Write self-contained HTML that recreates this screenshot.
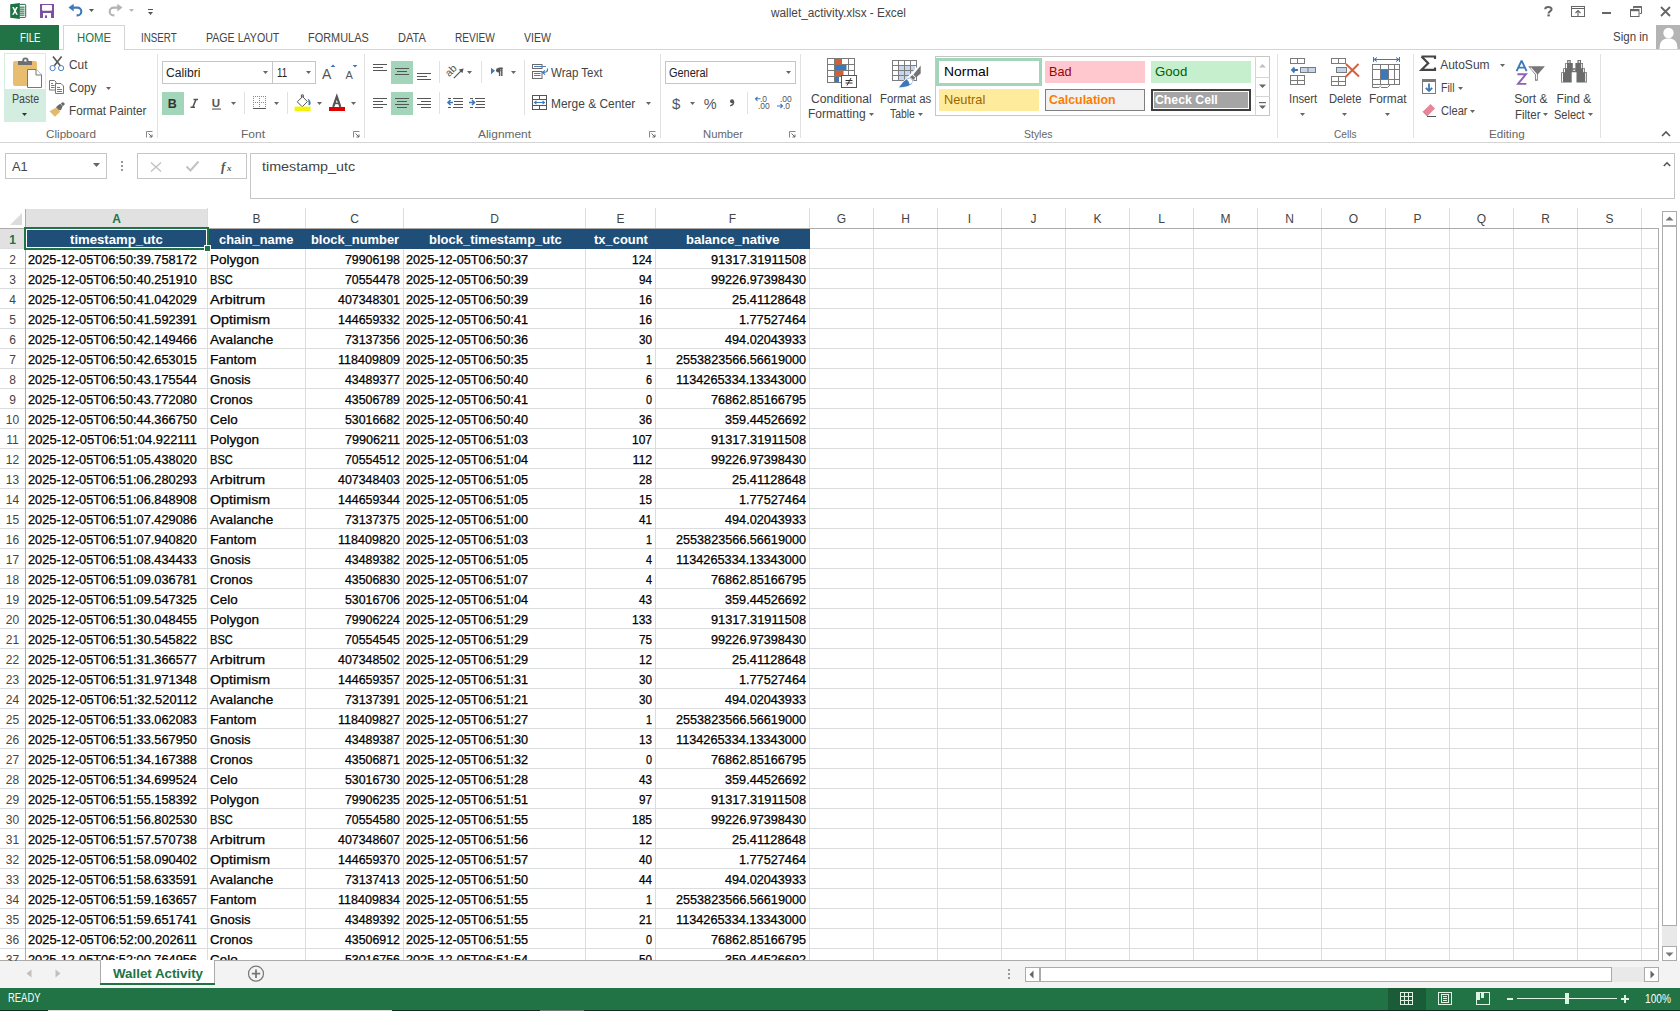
<!DOCTYPE html>
<html><head><meta charset="utf-8"><title>wallet_activity.xlsx - Excel</title>
<style>
html,body{margin:0;padding:0;}
body{width:1680px;height:1011px;overflow:hidden;position:relative;background:#fff;font-family:"Liberation Sans",sans-serif;}
.t{position:absolute;white-space:pre;transform-origin:0 0;}
.g{-webkit-text-stroke:0.25px currentColor;}
.r{position:absolute;box-sizing:border-box;}
svg.r{overflow:visible;}
</style></head><body>
<div class="t" style="left:771.06px;top:7.00px;font-size:12px;line-height:12px;color:#444;font-weight:400;transform:scaleX(0.9838);">wallet_activity.xlsx - Excel</div>
<div class="r" style="left:0px;top:25px;width:59px;height:25px;background:#217346"></div>
<div class="t" style="left:19.50px;top:32.00px;font-size:12px;line-height:12px;color:#fff;font-weight:400;transform:scaleX(0.8096);">FILE</div>
<div class="r" style="left:59px;top:49px;width:1621px;height:1px;background:#d4d4d4"></div>
<div class="r" style="left:63px;top:25px;width:62px;height:25px;border:1px solid #d4d4d4;border-bottom:none;background:#fff"></div>
<div class="t" style="left:76.50px;top:32.00px;font-size:12px;line-height:12px;color:#217346;font-weight:400;transform:scaleX(0.9444);">HOME</div>
<div class="t" style="left:140.50px;top:32.00px;font-size:12px;line-height:12px;color:#444;font-weight:400;transform:scaleX(0.8151);">INSERT</div>
<div class="t" style="left:205.70px;top:32.00px;font-size:12px;line-height:12px;color:#444;font-weight:400;transform:scaleX(0.8840);">PAGE LAYOUT</div>
<div class="t" style="left:308.00px;top:32.00px;font-size:12px;line-height:12px;color:#444;font-weight:400;transform:scaleX(0.9106);">FORMULAS</div>
<div class="t" style="left:398.00px;top:32.00px;font-size:12px;line-height:12px;color:#444;font-weight:400;transform:scaleX(0.9193);">DATA</div>
<div class="t" style="left:455.00px;top:32.00px;font-size:12px;line-height:12px;color:#444;font-weight:400;transform:scaleX(0.8428);">REVIEW</div>
<div class="t" style="left:523.70px;top:32.00px;font-size:12px;line-height:12px;color:#444;font-weight:400;transform:scaleX(0.8774);">VIEW</div>
<div class="t" style="left:1613.00px;top:31.00px;font-size:12px;line-height:12px;color:#444;font-weight:400;transform:scaleX(0.9613);">Sign in</div>
<svg class="r" style="left:9px;top:2px;" width="18" height="18" viewBox="0 0 18 18">
<path d="M1.2 2.2 L10.8 0.9 L10.8 16.9 L1.2 15.8 Z" fill="#1e7145"/>
<rect x="10.3" y="2.4" width="6.4" height="13" rx="0.8" fill="#fff" stroke="#1e7145" stroke-width="1"/>
<g fill="#1e7145"><rect x="10.5" y="4.6" width="5" height="1.1"/><rect x="10.5" y="6.6" width="5" height="1.1"/><rect x="10.5" y="8.6" width="5" height="1.1"/><rect x="10.5" y="10.6" width="5" height="1.1"/><rect x="10.5" y="12.6" width="5" height="1.1"/></g>
<path d="M3.2 5 L4.9 5 L6 7.2 L7.1 5 L8.8 5 L6.9 8.9 L8.9 12.8 L7.2 12.8 L6 10.5 L4.8 12.8 L3.1 12.8 L5.1 8.9 Z" fill="#fff"/>
</svg>
<svg class="r" style="left:40px;top:4px;" width="14" height="14" viewBox="0 0 14 14">
<path d="M0 0H14V14H0Z" fill="#80509f"/>
<rect x="2" y="1" width="10" height="5.8" rx="1" fill="#fff"/>
<rect x="3" y="9" width="8" height="5" fill="#fff"/>
<rect x="5" y="11.4" width="2" height="2.6" fill="#80509f"/>
</svg>
<svg class="r" style="left:67px;top:3px;" width="18" height="15" viewBox="0 0 18 15">
<path d="M5 4.6 H10.4 A3.9 3.9 0 0 1 10.4 12.4 H9.6" fill="none" stroke="#3f79b8" stroke-width="2.1"/>
<path d="M1.5 4.6 L6.7 0.8 L6.7 8.4 Z" fill="#3f79b8"/>
</svg>
<svg class="r" style="left:89px;top:9px;" width="5" height="3" viewBox="0 0 5 3"><path d="M0 0H5L2.5 3Z" fill="#555"/></svg>
<svg class="r" style="left:106px;top:3px;" width="18" height="15" viewBox="0 0 18 15">
<path d="M13 4.6 H7.6 A3.9 3.9 0 0 0 7.6 12.4 H8.4" fill="none" stroke="#b3b3b3" stroke-width="2.1"/>
<path d="M16.5 4.6 L11.3 0.8 L11.3 8.4 Z" fill="#b3b3b3"/>
</svg>
<svg class="r" style="left:129px;top:9px;" width="5" height="3" viewBox="0 0 5 3"><path d="M0 0H5L2.5 3Z" fill="#b8b8b8"/></svg>
<div class="r" style="left:148px;top:9px;width:5px;height:1px;background:#555"></div>
<svg class="r" style="left:148px;top:12px;" width="5" height="3" viewBox="0 0 5 3"><path d="M0 0H5L2.5 3Z" fill="#555"/></svg>
<svg class="r" style="left:1544px;top:6px;" width="9" height="11" viewBox="0 0 9 11"><path d="M1.2 3.2 C1.2 0.4 7.6 0.2 7.6 3.2 C7.6 5.2 4.5 5.5 4.5 7.4" fill="none" stroke="#666" stroke-width="2"/><rect x="3.4" y="8.4" width="2.4" height="2" fill="#666"/></svg>
<svg class="r" style="left:1571px;top:6px;" width="14" height="11" viewBox="0 0 14 11"><rect x="0.5" y="0.5" width="13" height="10" fill="none" stroke="#666"/><path d="M0.5 2.5H13.5" stroke="#666"/><path d="M7 10V4.5 M4.5 7L7 4.5L9.5 7" fill="none" stroke="#666" stroke-width="1.1"/></svg>
<div class="r" style="left:1602px;top:12px;width:9px;height:2px;background:#666"></div>
<svg class="r" style="left:1630px;top:6px;" width="12" height="11" viewBox="0 0 12 11"><path d="M3.5 2.5V0.5H11.5V7.5H9.5" fill="none" stroke="#666" stroke-width="1"/><rect x="0.5" y="3.5" width="8.5" height="7" fill="none" stroke="#666"/><path d="M0.5 4.5H9" stroke="#666" stroke-width="1.4"/><path d="M3.5 1.2H11.5" stroke="#666" stroke-width="1.4"/></svg>
<svg class="r" style="left:1660px;top:6px;" width="11" height="11" viewBox="0 0 11 11"><path d="M1 1L10 10M10 1L1 10" stroke="#666" stroke-width="1.8"/></svg>
<svg class="r" style="left:1656px;top:25px;" width="24" height="24" viewBox="0 0 24 24"><rect width="24" height="24" fill="#b4b4b4"/><circle cx="12.5" cy="8" r="5.2" fill="#fff"/><path d="M3.5 24 C3.5 16 7 13.6 12.5 13.6 C18 13.6 21.5 16 21.5 24Z" fill="#fff"/></svg>
<div class="r" style="left:4px;top:53px;width:42px;height:36px;border:1px solid #d3ede1;border-bottom:none;background:#fff"></div>
<div class="r" style="left:4px;top:89px;width:42px;height:33px;background:#d3ede1"></div>
<svg class="r" style="left:12px;top:57px;" width="31" height="32" viewBox="0 0 31 32">
<rect x="1" y="4" width="24" height="25" rx="2" fill="#e9bd6f"/>
<rect x="6" y="4" width="14" height="4" fill="#6e6e6e"/>
<circle cx="13.4" cy="3.6" r="3.1" fill="#6e6e6e"/><circle cx="13.4" cy="3.4" r="1.2" fill="#fff"/>
<path d="M15.5 12.5 H24 L29.5 18 V30.5 H15.5 Z" fill="#fff" stroke="#777" stroke-width="1"/>
<path d="M24 12.5 V18 H29.5" fill="#fff" stroke="#777" stroke-width="1"/>
</svg>
<div class="t" style="left:11.70px;top:93.00px;font-size:12px;line-height:12px;color:#444;font-weight:400;transform:scaleX(0.8871);">Paste</div>
<svg class="r" style="left:22px;top:113px;" width="5" height="3" viewBox="0 0 5 3"><path d="M0 0H5L2.5 3Z" fill="#333"/></svg>
<svg class="r" style="left:49px;top:55px;" width="17" height="17" viewBox="0 0 17 17">
<path d="M4 1.5 L11.3 10.8 M12.6 1.5 L5.3 10.8" stroke="#555" stroke-width="1.6"/>
<circle cx="3.6" cy="13.1" r="2.6" fill="#fff" stroke="#4a80bd" stroke-width="1"/>
<circle cx="12.1" cy="13.1" r="2.6" fill="#fff" stroke="#4a80bd" stroke-width="1"/>
</svg>
<div class="t" style="left:68.50px;top:59.00px;font-size:12px;line-height:12px;color:#444;font-weight:400;transform:scaleX(0.9861);">Cut</div>
<svg class="r" style="left:48px;top:79px;" width="17" height="16" viewBox="0 0 17 16">
<path d="M1.5 1.5H6.5L8 3V11H1.5Z" fill="#fff" stroke="#777"/>
<g stroke="#4a80bd" stroke-width="1"><path d="M3 4.5H5M3 6.5H6.5M3 8.5H6.5"/></g>
<path d="M7.5 4.5H13L15.5 7V14.5H7.5Z" fill="#fff" stroke="#777"/>
<g stroke="#4a80bd" stroke-width="1"><path d="M9 8.5H12M9 10.5H14M9 12.5H14"/></g>
</svg>
<div class="t" style="left:68.50px;top:82.00px;font-size:12px;line-height:12px;color:#444;font-weight:400;transform:scaleX(0.9779);">Copy</div>
<svg class="r" style="left:106px;top:87px;" width="5" height="3" viewBox="0 0 5 3"><path d="M0 0H5L2.5 3Z" fill="#666"/></svg>
<svg class="r" style="left:49px;top:102px;" width="17" height="15" viewBox="0 0 17 15">
<path d="M0.5 9.2 L7.2 5.5 L11.2 9.8 L5.8 14.8 Z" fill="#e3b96b"/>
<path d="M7.6 4.6 L11.2 1.8 L13.6 4.2 L11.8 8.6 Z" fill="#6a6a6a"/>
<path d="M7 5.2 L10.6 2.4 L13.2 5 L10.2 8.6 Z" fill="#6a6a6a"/>
<path d="M11.8 1.6 L14 0 L16 2 L13.8 4.2 Z" fill="#6a6a6a"/>
</svg>
<div class="t" style="left:68.50px;top:105.00px;font-size:12px;line-height:12px;color:#444;font-weight:400;transform:scaleX(0.9763);">Format Painter</div>
<svg class="r" style="left:146px;top:131px;" width="7" height="7" viewBox="0 0 7 7"><path d="M0.5 6.5V0.5H6.5" fill="none" stroke="#888"/><path d="M2.5 2.5L6 6M6 3.5V6H3.5" fill="none" stroke="#666" stroke-width="1"/></svg>
<div class="r" style="left:162px;top:61px;width:111px;height:23px;border:1px solid #c6c6c6;background:#fff"></div>
<div class="r" style="left:272px;top:61px;width:44px;height:23px;border:1px solid #c6c6c6;background:#fff"></div>
<div class="t" style="left:165.60px;top:67.00px;font-size:12px;line-height:12px;color:#222;font-weight:400;transform:scaleX(1.0112);">Calibri</div>
<svg class="r" style="left:263px;top:71px;" width="5" height="3" viewBox="0 0 5 3"><path d="M0 0H5L2.5 3Z" fill="#666"/></svg>
<div class="t" style="left:277.00px;top:67.00px;font-size:12px;line-height:12px;color:#222;font-weight:400;transform:scaleX(0.8013);">11</div>
<svg class="r" style="left:306px;top:71px;" width="5" height="3" viewBox="0 0 5 3"><path d="M0 0H5L2.5 3Z" fill="#666"/></svg>
<svg class="r" style="left:321px;top:64px;" width="16" height="16" viewBox="0 0 16 16"><text x="1" y="14.5" font-family="Liberation Sans" font-size="14" fill="#555">A</text><path d="M9.5 3H14.5L12 0.5Z" fill="#3d78b8"/></svg>
<svg class="r" style="left:344px;top:64px;" width="16" height="16" viewBox="0 0 16 16"><text x="1.5" y="14.5" font-family="Liberation Sans" font-size="11" fill="#555">A</text><path d="M8.5 1H13.5L11 3.5Z" fill="#3d78b8"/></svg>
<div class="r" style="left:162px;top:92px;width:22px;height:23px;background:#a2d5b9"></div>
<svg class="r" style="left:162px;top:92px;" width="22" height="23" viewBox="0 0 22 23"><text x="5.8" y="15.6" font-family="Liberation Sans" font-weight="700" font-size="12.5" fill="#333">B</text></svg>
<svg class="r" style="left:186px;top:92px;" width="18" height="23" viewBox="0 0 18 23"><path d="M7.5 7.4H12 M4.5 15.3H9 M10 7.4 L6.8 15.3" fill="none" stroke="#555" stroke-width="1.5"/></svg>
<svg class="r" style="left:206px;top:92px;" width="20" height="23" viewBox="0 0 20 23"><text x="5.8" y="15.2" font-family="Liberation Sans" font-weight="700" font-size="11.5" fill="#555">U</text><rect x="6" y="16.5" width="9" height="1.1" fill="#555"/></svg>
<svg class="r" style="left:231px;top:102px;" width="5" height="3" viewBox="0 0 5 3"><path d="M0 0H5L2.5 3Z" fill="#666"/></svg>
<div class="r" style="left:244px;top:92px;width:1px;height:22px;background:#e1e1e1"></div>
<svg class="r" style="left:252px;top:95px;" width="15" height="15" viewBox="0 0 15 15"><g fill="#888"><path d="M1 1h1v1H1zM3 1h1v1H3zM5 1h1v1H5zM7 1h1v1H7zM9 1h1v1H9zM11 1h1v1h-1zM13 1h1v1h-1zM1 3h1v1H1zM7 3h1v1H7zM13 3h1v1h-1zM1 5h1v1H1zM7 5h1v1H7zM13 5h1v1h-1zM1 7h1v1H1zM3 7h1v1H3zM5 7h1v1H5zM7 7h1v1H7zM9 7h1v1H9zM11 7h1v1h-1zM13 7h1v1h-1zM1 9h1v1H1zM7 9h1v1H7zM13 9h1v1h-1zM1 11h1v1H1zM7 11h1v1H7zM13 11h1v1h-1z"/></g><rect x="1" y="13" width="13" height="1" fill="#555"/></svg>
<svg class="r" style="left:274px;top:102px;" width="5" height="3" viewBox="0 0 5 3"><path d="M0 0H5L2.5 3Z" fill="#666"/></svg>
<div class="r" style="left:287px;top:92px;width:1px;height:22px;background:#e1e1e1"></div>
<svg class="r" style="left:293px;top:94px;" width="19" height="18" viewBox="0 0 19 18">
<path d="M4.3 7.8 L9.6 2.6 L14.4 7.6 L9.2 12.8 Z" fill="#fff" stroke="#555" stroke-width="1" stroke-linejoin="round"/>
<path d="M8.4 4 V0.9 H10.3 V3.6" fill="none" stroke="#555" stroke-width="1"/>
<path d="M14.6 4.8 C16.8 5.6 18 7.6 17.6 9.8 C17.2 11.2 16 11.6 15.4 11 C15.8 9 15.6 7 14.6 4.8Z" fill="#3d78b8"/>
<rect x="1.6" y="12.6" width="16" height="4.6" fill="#f2f20a"/>
</svg>
<svg class="r" style="left:317px;top:102px;" width="5" height="3" viewBox="0 0 5 3"><path d="M0 0H5L2.5 3Z" fill="#666"/></svg>
<svg class="r" style="left:328px;top:95px;" width="18" height="17" viewBox="0 0 18 17">
<path d="M5.2 11.8 L8.8 1.6 L12.4 11.8" fill="none" stroke="#555" stroke-width="2.2" stroke-linejoin="miter"/>
<path d="M6.6 8.4H11" stroke="#555" stroke-width="1.5"/>
<rect x="1" y="12" width="16" height="4" fill="#e00000"/>
</svg>
<svg class="r" style="left:351px;top:102px;" width="5" height="3" viewBox="0 0 5 3"><path d="M0 0H5L2.5 3Z" fill="#666"/></svg>
<svg class="r" style="left:353px;top:131px;" width="7" height="7" viewBox="0 0 7 7"><path d="M0.5 6.5V0.5H6.5" fill="none" stroke="#888"/><path d="M2.5 2.5L6 6M6 3.5V6H3.5" fill="none" stroke="#666" stroke-width="1"/></svg>
<div class="r" style="left:391px;top:61px;width:22px;height:23px;background:#a2d5b9"></div>
<div class="r" style="left:391px;top:92px;width:22px;height:23px;background:#a2d5b9"></div>
<svg class="r" style="left:373px;top:0px;" width="14" height="1" viewBox="0 0 14 1"><rect x="0" y="64" width="14" height="1" fill="#555"/><rect x="0" y="67" width="10" height="1" fill="#555"/><rect x="0" y="70" width="14" height="1" fill="#555"/></svg>
<svg class="r" style="left:395px;top:0px;" width="14" height="1" viewBox="0 0 14 1"><rect x="0.0" y="68" width="14" height="1" fill="#555"/><rect x="2.0" y="71" width="10" height="1" fill="#555"/><rect x="0.0" y="74" width="14" height="1" fill="#555"/></svg>
<svg class="r" style="left:417px;top:0px;" width="14" height="1" viewBox="0 0 14 1"><rect x="0" y="73" width="14" height="1" fill="#555"/><rect x="0" y="76" width="10" height="1" fill="#555"/><rect x="0" y="79" width="14" height="1" fill="#555"/></svg>
<svg class="r" style="left:373px;top:0px;" width="14" height="1" viewBox="0 0 14 1"><rect x="0" y="98" width="14" height="1" fill="#555"/><rect x="0" y="101" width="10" height="1" fill="#555"/><rect x="0" y="104" width="14" height="1" fill="#555"/><rect x="0" y="107" width="10" height="1" fill="#555"/></svg>
<svg class="r" style="left:395px;top:0px;" width="14" height="1" viewBox="0 0 14 1"><rect x="0.0" y="98" width="14" height="1" fill="#555"/><rect x="2.0" y="101" width="10" height="1" fill="#555"/><rect x="0.0" y="104" width="14" height="1" fill="#555"/><rect x="2.0" y="107" width="10" height="1" fill="#555"/></svg>
<svg class="r" style="left:417px;top:0px;" width="14" height="1" viewBox="0 0 14 1"><rect x="0" y="98" width="14" height="1" fill="#555"/><rect x="4" y="101" width="10" height="1" fill="#555"/><rect x="0" y="104" width="14" height="1" fill="#555"/><rect x="4" y="107" width="10" height="1" fill="#555"/></svg>
<div class="r" style="left:439px;top:61px;width:1px;height:22px;background:#e1e1e1"></div>
<div class="r" style="left:439px;top:92px;width:1px;height:22px;background:#e1e1e1"></div>
<div class="r" style="left:481px;top:61px;width:1px;height:22px;background:#e1e1e1"></div>
<div class="r" style="left:524px;top:60px;width:1px;height:55px;background:#e1e1e1"></div>
<svg class="r" style="left:444px;top:62px;" width="22" height="20" viewBox="0 0 22 20">
<text x="0" y="0" transform="translate(5.2 15.2) rotate(-45)" font-family="Liberation Sans" font-size="10.5" fill="#555">ab</text>
<path d="M9.8 16.2 L18.6 7.4" stroke="#555" stroke-width="1.2"/>
<path d="M19.6 6.4 L14.8 7.6 L18.4 11.2 Z" fill="#555"/>
</svg>
<svg class="r" style="left:467px;top:71px;" width="5" height="3" viewBox="0 0 5 3"><path d="M0 0H5L2.5 3Z" fill="#666"/></svg>
<svg class="r" style="left:490px;top:67px;" width="14" height="10" viewBox="0 0 14 10"><path d="M1 0.8 L5 3.8 L1 7.2Z" fill="#3d78b8"/><path d="M8.6 1.2H12.8 M9.6 1.2V9 M11.8 1.2V9" stroke="#555" stroke-width="1.4"/><circle cx="8.3" cy="3.3" r="2.3" fill="#555"/></svg>
<svg class="r" style="left:511px;top:71px;" width="5" height="3" viewBox="0 0 5 3"><path d="M0 0H5L2.5 3Z" fill="#666"/></svg>
<svg class="r" style="left:446px;top:97px;" width="18" height="12" viewBox="0 0 18 12">
<g fill="#555"><rect x="7" y="1" width="10" height="1"/><rect x="8" y="4" width="9" height="1"/><rect x="8" y="7" width="9" height="1"/><rect x="7" y="10" width="10" height="1"/><rect x="2" y="1" width="3" height="1"/><rect x="2" y="10" width="3" height="1"/></g>
<path d="M7 5.5 H2 M4.5 3 L2 5.5 L4.5 8" fill="none" stroke="#3d78b8" stroke-width="1.6"/>
</svg>
<svg class="r" style="left:468px;top:97px;" width="18" height="12" viewBox="0 0 18 12">
<g fill="#555"><rect x="7" y="1" width="10" height="1"/><rect x="8" y="4" width="9" height="1"/><rect x="8" y="7" width="9" height="1"/><rect x="7" y="10" width="10" height="1"/><rect x="2" y="1" width="3" height="1"/><rect x="2" y="10" width="3" height="1"/></g>
<path d="M1 5.5 H6.5 M4 3 L6.5 5.5 L4 8" fill="none" stroke="#3d78b8" stroke-width="1.6"/>
</svg>
<svg class="r" style="left:531px;top:63px;" width="18" height="17" viewBox="0 0 18 17">
<rect x="1.5" y="1.5" width="9.5" height="4" fill="#fff" stroke="#6a6a6a"/>
<path d="M3 3.5 H15" stroke="#4d7fb5" stroke-width="1"/>
<rect x="1.5" y="8.5" width="9.5" height="7" fill="#fff" stroke="#6a6a6a"/>
<path d="M3 10.5H9.5 M3 12.5H9.5" stroke="#4d7fb5" stroke-width="1"/>
<path d="M16.5 5.5 C17 8.5 15.5 9.5 11.8 9.5" fill="none" stroke="#3d78b8" stroke-width="1.2"/>
<path d="M14 7.4 L11.6 9.5 L14 11.6" fill="none" stroke="#3d78b8" stroke-width="1.2"/>
</svg>
<div class="t" style="left:551.40px;top:67.00px;font-size:12px;line-height:12px;color:#444;font-weight:400;transform:scaleX(0.9612);">Wrap Text</div>
<svg class="r" style="left:531px;top:94px;" width="17" height="17" viewBox="0 0 17 17">
<rect x="1.5" y="1.5" width="14" height="14" fill="none" stroke="#555"/>
<path d="M1.5 5.5H15.5 M1.5 11.5H15.5 M8.5 1.5V5.5 M8.5 11.5V15.5" stroke="#555"/>
<path d="M3.5 8.5H13.5 M5.5 6.8 L3.5 8.5 L5.5 10.2 M11.5 6.8 L13.5 8.5 L11.5 10.2" fill="none" stroke="#3d78b8" stroke-width="1.1"/>
</svg>
<div class="t" style="left:551.40px;top:98.00px;font-size:12px;line-height:12px;color:#444;font-weight:400;transform:scaleX(0.9950);">Merge &amp; Center</div>
<svg class="r" style="left:646px;top:102px;" width="5" height="3" viewBox="0 0 5 3"><path d="M0 0H5L2.5 3Z" fill="#666"/></svg>
<svg class="r" style="left:649px;top:131px;" width="7" height="7" viewBox="0 0 7 7"><path d="M0.5 6.5V0.5H6.5" fill="none" stroke="#888"/><path d="M2.5 2.5L6 6M6 3.5V6H3.5" fill="none" stroke="#666" stroke-width="1"/></svg>
<div class="r" style="left:665px;top:61px;width:131px;height:23px;border:1px solid #c6c6c6;background:#fff"></div>
<div class="t" style="left:668.60px;top:67.00px;font-size:12px;line-height:12px;color:#222;font-weight:400;transform:scaleX(0.9129);">General</div>
<svg class="r" style="left:786px;top:71px;" width="5" height="3" viewBox="0 0 5 3"><path d="M0 0H5L2.5 3Z" fill="#666"/></svg>
<svg class="r" style="left:670px;top:94px;" width="14" height="18" viewBox="0 0 14 18"><text x="2" y="14.5" font-family="Liberation Sans" font-size="15" fill="#555">$</text></svg>
<svg class="r" style="left:690px;top:102px;" width="5" height="3" viewBox="0 0 5 3"><path d="M0 0H5L2.5 3Z" fill="#666"/></svg>
<svg class="r" style="left:702px;top:94px;" width="16" height="17" viewBox="0 0 16 17"><text x="1.8" y="14.8" font-family="Liberation Sans" font-size="14.5" fill="#555">%</text></svg>
<svg class="r" style="left:727px;top:98px;" width="8" height="9" viewBox="0 0 8 9"><circle cx="5" cy="3.2" r="2" fill="#555"/><path d="M6.6 3.5 C6.8 5.8 5.2 7.2 3.2 7.8" fill="none" stroke="#555" stroke-width="1.4"/></svg>
<div class="r" style="left:747px;top:92px;width:1px;height:22px;background:#e1e1e1"></div>
<svg class="r" style="left:754px;top:95px;" width="17" height="15" viewBox="0 0 17 15">
<text x="6" y="7" font-family="Liberation Sans" font-size="8.5" fill="#555">.0</text>
<text x="4" y="14" font-family="Liberation Sans" font-size="8.5" fill="#555">.00</text>
<path d="M6.5 3.8H1.5 M3.5 1.8 L1.5 3.8 L3.5 5.8" fill="none" stroke="#3d78b8" stroke-width="1.1"/>
</svg>
<svg class="r" style="left:776px;top:95px;" width="17" height="15" viewBox="0 0 17 15">
<text x="4" y="7" font-family="Liberation Sans" font-size="8.5" fill="#555">.00</text>
<text x="7" y="14" font-family="Liberation Sans" font-size="8.5" fill="#555">.0</text>
<path d="M1 11H6.5 M4.5 9 L6.5 11 L4.5 13" fill="none" stroke="#3d78b8" stroke-width="1.1"/>
</svg>
<svg class="r" style="left:789px;top:131px;" width="7" height="7" viewBox="0 0 7 7"><path d="M0.5 6.5V0.5H6.5" fill="none" stroke="#888"/><path d="M2.5 2.5L6 6M6 3.5V6H3.5" fill="none" stroke="#666" stroke-width="1"/></svg>
<svg class="r" style="left:826px;top:57px;" width="32" height="32" viewBox="0 0 32 32">
<g fill="none" stroke="#7a7a7a" stroke-width="1"><rect x="1.5" y="1.5" width="27" height="24"/>
<path d="M8.5 1.5V25.5 M15.5 1.5V25.5 M22.5 1.5V25.5 M1.5 7.5H28.5 M1.5 13.5H28.5 M1.5 19.5H28.5"/></g>
<rect x="9" y="2" width="6" height="5.5" fill="#d85c34"/>
<rect x="9" y="8" width="11.5" height="5" fill="#3d78b8"/>
<rect x="9" y="14" width="8.5" height="5" fill="#d85c34"/>
<rect x="9" y="20" width="4" height="5" fill="#3d78b8"/>
<rect x="15.5" y="18.5" width="15" height="12" fill="#fff" stroke="#555" stroke-width="1"/>
<path d="M19.5 23.5H26.5 M19.5 26H26.5 M25 21 L21 28.5" stroke="#333" stroke-width="1"/>
</svg>
<div class="t" style="left:810.80px;top:93.00px;font-size:12px;line-height:12px;color:#444;font-weight:400;transform:scaleX(1.0090);">Conditional</div>
<div class="t" style="left:807.70px;top:108.00px;font-size:12px;line-height:12px;color:#444;font-weight:400;transform:scaleX(1.0042);">Formatting</div>
<svg class="r" style="left:869px;top:113px;" width="5" height="3" viewBox="0 0 5 3"><path d="M0 0H5L2.5 3Z" fill="#666"/></svg>
<svg class="r" style="left:891px;top:59px;" width="32" height="30" viewBox="0 0 32 30">
<rect x="7" y="6" width="17" height="16" fill="#c6d6ee"/>
<g fill="none" stroke="#7d7d7d" stroke-width="1"><rect x="1.5" y="1.5" width="24" height="20"/>
<path d="M7.5 1.5V21.5 M13.5 1.5V21.5 M19.5 1.5V21.5 M1.5 6.5H25.5 M1.5 11.5H25.5 M1.5 16.5H25.5"/></g>
<path d="M13 25 L30.5 7" stroke="#fff" stroke-width="5"/>
<path d="M29.7 6.6 L29.7 14.4 L25 18.4 L22.4 15.6 Z" fill="#747474"/>
<path d="M18.6 18.6 L21.4 16 L24.2 18.8 L21.4 21.4 Z" fill="#747474"/>
<path d="M7.2 28.8 C10 25.4 12.5 21.6 15 20.3 A3.7 3.7 0 0 1 21.2 24.6 C19 27.4 14 28.8 7.2 28.8 Z" fill="#3d78b8" stroke="#fff" stroke-width="0.8"/>
<path d="M15.8 20.6 A3 3 0 0 1 20.7 24.2 L18.6 25.4 C18.2 23.4 17.2 21.8 15.8 20.6Z" fill="#fff"/>
</svg>
<div class="t" style="left:879.90px;top:93.00px;font-size:12px;line-height:12px;color:#444;font-weight:400;transform:scaleX(0.9481);">Format as</div>
<div class="t" style="left:890.20px;top:108.00px;font-size:12px;line-height:12px;color:#444;font-weight:400;transform:scaleX(0.8682);">Table</div>
<svg class="r" style="left:918px;top:113px;" width="5" height="3" viewBox="0 0 5 3"><path d="M0 0H5L2.5 3Z" fill="#666"/></svg>
<div class="r" style="left:935px;top:56px;width:335px;height:60px;border:1px solid #c6c6c6;background:#fff"></div>
<div class="r" style="left:1255px;top:56px;width:15px;height:60px;border-left:1px solid #d4d4d4"></div>
<div class="r" style="left:1255px;top:77px;width:15px;height:1px;background:#d4d4d4"></div>
<div class="r" style="left:1255px;top:96px;width:15px;height:1px;background:#d4d4d4"></div>
<svg class="r" style="left:1258px;top:63px;" width="9" height="5" viewBox="0 0 9 5"><path d="M1 4.5H8L4.5 1Z" fill="#c0c0c0"/></svg>
<svg class="r" style="left:1258px;top:84px;" width="9" height="5" viewBox="0 0 9 5"><path d="M1 0.5H8L4.5 4Z" fill="#666"/></svg>
<svg class="r" style="left:1258px;top:101px;" width="9" height="9" viewBox="0 0 9 9"><rect x="1" y="1" width="7" height="1.2" fill="#666"/><path d="M1 4.5H8L4.5 8Z" fill="#666"/></svg>
<div class="r" style="left:936px;top:58px;width:106px;height:28px;border:3px solid #a2d5b9;background:#fff"></div>
<div class="t" style="left:943.70px;top:65.00px;font-size:13px;line-height:13px;color:#000;font-weight:400;transform:scaleX(1.0686);">Normal</div>
<div class="r" style="left:1045px;top:61px;width:100px;height:22px;background:#ffc7ce"></div>
<div class="t" style="left:1049.40px;top:65.00px;font-size:13px;line-height:13px;color:#9c0006;font-weight:400;transform:scaleX(0.9767);">Bad</div>
<div class="r" style="left:1151px;top:61px;width:100px;height:22px;background:#c6efce"></div>
<div class="t" style="left:1155.20px;top:65.00px;font-size:13px;line-height:13px;color:#006100;font-weight:400;transform:scaleX(1.0162);">Good</div>
<div class="r" style="left:939px;top:89px;width:100px;height:22px;background:#ffeb9c"></div>
<div class="t" style="left:943.70px;top:93.00px;font-size:13px;line-height:13px;color:#9c6500;font-weight:400;transform:scaleX(0.9851);">Neutral</div>
<div class="r" style="left:1045px;top:89px;width:100px;height:22px;background:#f2f2f2;border:1px solid #7f7f7f"></div>
<div class="t" style="left:1049.40px;top:93.00px;font-size:13px;line-height:13px;color:#fa7d00;font-weight:700;transform:scaleX(0.9505);">Calculation</div>
<div class="r" style="left:1151px;top:89px;width:100px;height:22px;background:#a5a5a5;border:2px solid #3f3f3f;box-shadow:inset 0 0 0 1px #fff"></div>
<div class="t" style="left:1155.20px;top:93.00px;font-size:13px;line-height:13px;color:#fff;font-weight:700;transform:scaleX(0.9444);">Check Cell</div>
<svg class="r" style="left:1289px;top:57px;" width="29" height="30" viewBox="0 0 29 30">
<g fill="none" stroke="#7a7a7a" stroke-width="1"><rect x="1.5" y="1.5" width="14" height="5"/><path d="M8.5 1.5V6.5"/>
<rect x="1.5" y="18.5" width="14" height="9"/><path d="M8.5 18.5V27.5 M1.5 23.5H15.5"/></g>
<rect x="11.5" y="10.5" width="15" height="5" fill="#c3d6ec" stroke="#7a7a7a"/><path d="M19 10.5V15.5" stroke="#7a7a7a"/>
<path d="M9 13H3 M5.5 10.5 L3 13 L5.5 15.5" fill="none" stroke="#3d78b8" stroke-width="1.8"/>
</svg>
<div class="t" style="left:1288.60px;top:93.00px;font-size:12px;line-height:12px;color:#444;font-weight:400;transform:scaleX(0.9400);">Insert</div>
<svg class="r" style="left:1300px;top:113px;" width="5" height="3" viewBox="0 0 5 3"><path d="M0 0H5L2.5 3Z" fill="#666"/></svg>
<svg class="r" style="left:1330px;top:57px;" width="31" height="31" viewBox="0 0 31 31">
<g fill="none" stroke="#7a7a7a" stroke-width="1"><rect x="1.5" y="1.5" width="14" height="5"/><path d="M8.5 1.5V6.5"/>
<rect x="1.5" y="19.5" width="14" height="9"/><path d="M8.5 19.5V28.5 M1.5 24.5H15.5"/></g>
<rect x="6.5" y="10.5" width="10" height="5" fill="#c3d6ec" stroke="#7a7a7a"/>
<path d="M16 7 L29 19.5 M28.5 7 L15.5 20" stroke="#d9603b" stroke-width="2"/>
</svg>
<div class="t" style="left:1328.60px;top:93.00px;font-size:12px;line-height:12px;color:#444;font-weight:400;transform:scaleX(0.9343);">Delete</div>
<svg class="r" style="left:1342px;top:113px;" width="5" height="3" viewBox="0 0 5 3"><path d="M0 0H5L2.5 3Z" fill="#666"/></svg>
<svg class="r" style="left:1371px;top:56px;" width="32" height="33" viewBox="0 0 32 33">
<path d="M2.5 1V6 M28.5 1V6 M3 3.5H28 M6 1.5 L3 3.5 L6 5.5 M25 1.5 L28 3.5 L25 5.5" fill="none" stroke="#3d78b8" stroke-width="1"/>
<g fill="none" stroke="#7a7a7a" stroke-width="1"><rect x="1.5" y="8.5" width="27" height="20"/>
<path d="M9.5 8.5V28.5 M17.5 8.5V28.5 M23.5 8.5V28.5 M1.5 13.5H28.5 M1.5 23.5H28.5"/>
<path d="M1.5 28.5 V31.5 H8 L10 29.5 M10 31.5 H16.5 L19.5 28.5"/></g>
<rect x="10" y="14" width="7" height="9" fill="#3d78b8"/>
</svg>
<div class="t" style="left:1368.50px;top:93.00px;font-size:12px;line-height:12px;color:#444;font-weight:400;transform:scaleX(0.9874);">Format</div>
<svg class="r" style="left:1385px;top:113px;" width="5" height="3" viewBox="0 0 5 3"><path d="M0 0H5L2.5 3Z" fill="#666"/></svg>
<svg class="r" style="left:1420px;top:55px;" width="17" height="17" viewBox="0 0 17 17"><path d="M1.5 1.5H15 V4 M1.5 1.5 L8.2 8.2 L1.5 14.8 H15 V12.5" fill="none" stroke="#444" stroke-width="2.2" stroke-linejoin="miter"/></svg>
<div class="t" style="left:1440.20px;top:59.00px;font-size:12px;line-height:12px;color:#444;font-weight:400;">AutoSum</div>
<svg class="r" style="left:1500px;top:64px;" width="5" height="3" viewBox="0 0 5 3"><path d="M0 0H5L2.5 3Z" fill="#666"/></svg>
<svg class="r" style="left:1421px;top:78px;" width="16" height="17" viewBox="0 0 16 17"><rect x="1.5" y="1.5" width="13" height="14" fill="#fff" stroke="#7a7a7a"/><rect x="1" y="1" width="14" height="3" fill="#7a7a7a"/><path d="M8 5.5V13 M4.8 9.8 L8 13 L11.2 9.8" fill="none" stroke="#3d78b8" stroke-width="1.8"/></svg>
<div class="t" style="left:1440.50px;top:82.00px;font-size:12px;line-height:12px;color:#444;font-weight:400;transform:scaleX(0.8824);">Fill</div>
<svg class="r" style="left:1458px;top:87px;" width="5" height="3" viewBox="0 0 5 3"><path d="M0 0H5L2.5 3Z" fill="#666"/></svg>
<svg class="r" style="left:1421px;top:102px;" width="16" height="15" viewBox="0 0 16 15"><path d="M2 9.5 L9.5 2 L14 6.5 L6.5 14 Z" fill="#e8849b"/><path d="M2 9.5 L6.5 14" stroke="#c85e77" stroke-width="1"/><path d="M6 14.5H15" stroke="#555" stroke-width="1"/></svg>
<div class="t" style="left:1440.50px;top:105.00px;font-size:12px;line-height:12px;color:#444;font-weight:400;transform:scaleX(0.9240);">Clear</div>
<svg class="r" style="left:1470px;top:110px;" width="5" height="3" viewBox="0 0 5 3"><path d="M0 0H5L2.5 3Z" fill="#666"/></svg>
<svg class="r" style="left:1510px;top:52px;" width="40" height="36" viewBox="0 0 40 36">
<path d="M6.6 19.2 L11.6 8.6 L16.6 19.2 M8.5 15.6 H14.7" fill="none" stroke="#3d78b8" stroke-width="1.9" stroke-linejoin="bevel"/>
<path d="M7.4 22.2 H16 L8 31.9 H16.4" fill="none" stroke="#8e62b6" stroke-width="1.9"/>
<path d="M18.2 14.2 H34.9 L27.8 22.5 V28.8 H25 V22.5 Z" fill="#777"/>
<path d="M20.6 15.6 L26.4 22.2 V27.6" fill="none" stroke="#fff" stroke-width="1.1"/>
</svg>
<div class="t" style="left:1514.20px;top:93.00px;font-size:12px;line-height:12px;color:#444;font-weight:400;">Sort &amp;</div>
<div class="t" style="left:1514.50px;top:109.00px;font-size:12px;line-height:12px;color:#444;font-weight:400;transform:scaleX(0.9572);">Filter</div>
<svg class="r" style="left:1543px;top:113px;" width="5" height="3" viewBox="0 0 5 3"><path d="M0 0H5L2.5 3Z" fill="#666"/></svg>
<svg class="r" style="left:1560px;top:59px;" width="29" height="25" viewBox="0 0 29 25">
<g fill="#6b6b6b">
<path d="M7.2 1.1 H10.7 V3.9 H12.8 V13.2 H11.7 V23.6 H1.2 V13.2 H3.2 V9.2 H5.2 V3.9 H7.2 Z"/>
<path d="M21 1.1 H17.5 V3.9 H15.4 V13.2 H16.5 V23.6 H27 V13.2 H25 V9.2 H23 V3.9 H21 Z"/>
<rect x="12.5" y="9.2" width="3.2" height="4"/>
</g>
<g fill="#fff"><rect x="8.4" y="1.8" width="1.1" height="2.1"/><rect x="18.7" y="1.8" width="1.1" height="2.1"/>
<rect x="13.2" y="10.7" width="1.8" height="1.1"/>
<rect x="2" y="14" width="1" height="8.8"/><rect x="4" y="10" width="1" height="3.2"/><rect x="6" y="4.7" width="1" height="4.5"/>
<rect x="25.2" y="14" width="1" height="8.8"/><rect x="23.2" y="10" width="1" height="3.2"/><rect x="21.2" y="4.7" width="1" height="4.5"/></g>
</svg>
<div class="t" style="left:1556.60px;top:93.00px;font-size:12px;line-height:12px;color:#444;font-weight:400;">Find &amp;</div>
<div class="t" style="left:1554.40px;top:109.00px;font-size:12px;line-height:12px;color:#444;font-weight:400;transform:scaleX(0.9173);">Select</div>
<svg class="r" style="left:1588px;top:113px;" width="5" height="3" viewBox="0 0 5 3"><path d="M0 0H5L2.5 3Z" fill="#666"/></svg>
<svg class="r" style="left:1661px;top:130px;" width="10" height="7" viewBox="0 0 10 7"><path d="M1 6 L5 2 L9 6" fill="none" stroke="#555" stroke-width="1.6"/></svg>
<div class="r" style="left:0px;top:142px;width:1680px;height:1px;background:#d4d4d4"></div>
<div class="r" style="left:157px;top:54px;width:1px;height:84px;background:#e1e1e1"></div>
<div class="r" style="left:364px;top:54px;width:1px;height:84px;background:#e1e1e1"></div>
<div class="r" style="left:660px;top:54px;width:1px;height:84px;background:#e1e1e1"></div>
<div class="r" style="left:800px;top:54px;width:1px;height:84px;background:#e1e1e1"></div>
<div class="r" style="left:1277px;top:54px;width:1px;height:84px;background:#e1e1e1"></div>
<div class="r" style="left:1413px;top:54px;width:1px;height:84px;background:#e1e1e1"></div>
<div class="r" style="left:1600px;top:54px;width:1px;height:84px;background:#e1e1e1"></div>
<div class="t" style="left:45.50px;top:129.00px;font-size:11.5px;line-height:11.5px;color:#666;font-weight:400;transform:scaleX(1.0158);">Clipboard</div>
<div class="t" style="left:241.00px;top:129.00px;font-size:11.5px;line-height:11.5px;color:#666;font-weight:400;transform:scaleX(1.0435);">Font</div>
<div class="t" style="left:478.00px;top:129.00px;font-size:11.5px;line-height:11.5px;color:#666;font-weight:400;transform:scaleX(1.0368);">Alignment</div>
<div class="t" style="left:702.90px;top:129.00px;font-size:11.5px;line-height:11.5px;color:#666;font-weight:400;transform:scaleX(0.9784);">Number</div>
<div class="t" style="left:1024.00px;top:129.00px;font-size:11.5px;line-height:11.5px;color:#666;font-weight:400;transform:scaleX(0.9095);">Styles</div>
<div class="t" style="left:1333.70px;top:129.00px;font-size:11.5px;line-height:11.5px;color:#666;font-weight:400;transform:scaleX(0.8832);">Cells</div>
<div class="t" style="left:1488.80px;top:129.00px;font-size:11.5px;line-height:11.5px;color:#666;font-weight:400;transform:scaleX(1.0145);">Editing</div>
<div class="r" style="left:5px;top:153px;width:102px;height:26px;border:1px solid #c6c6c6;background:#fff"></div>
<div class="t" style="left:12.00px;top:161.00px;font-size:12px;line-height:12px;color:#444;font-weight:400;transform:scaleX(1.0680);">A1</div>
<div class="r" style="left:137px;top:153px;width:110px;height:26px;border:1px solid #c6c6c6;background:#fff"></div>
<div class="r" style="left:250px;top:153px;width:425px;height:46px;border:1px solid #c6c6c6;border-right:none;background:#fff"></div>
<div class="r" style="left:250px;top:153px;width:1425px;height:46px;border:1px solid #c6c6c6;background:#fff"></div>
<div class="t" style="left:262.00px;top:161.00px;font-size:12px;line-height:12px;color:#444;font-weight:400;transform:scaleX(1.1940);">timestamp_utc</div>
<div class="r" style="left:25px;top:209px;width:182px;height:19px;background:#e1e1e1"></div>
<div class="r" style="left:0px;top:229px;width:25px;height:19px;background:#e1e1e1"></div>
<div class="r" style="left:26px;top:248px;width:1632px;height:1px;background:#dadcdd"></div>
<div class="r" style="left:26px;top:268px;width:1632px;height:1px;background:#dadcdd"></div>
<div class="r" style="left:26px;top:288px;width:1632px;height:1px;background:#dadcdd"></div>
<div class="r" style="left:26px;top:308px;width:1632px;height:1px;background:#dadcdd"></div>
<div class="r" style="left:26px;top:328px;width:1632px;height:1px;background:#dadcdd"></div>
<div class="r" style="left:26px;top:348px;width:1632px;height:1px;background:#dadcdd"></div>
<div class="r" style="left:26px;top:368px;width:1632px;height:1px;background:#dadcdd"></div>
<div class="r" style="left:26px;top:388px;width:1632px;height:1px;background:#dadcdd"></div>
<div class="r" style="left:26px;top:408px;width:1632px;height:1px;background:#dadcdd"></div>
<div class="r" style="left:26px;top:428px;width:1632px;height:1px;background:#dadcdd"></div>
<div class="r" style="left:26px;top:448px;width:1632px;height:1px;background:#dadcdd"></div>
<div class="r" style="left:26px;top:468px;width:1632px;height:1px;background:#dadcdd"></div>
<div class="r" style="left:26px;top:488px;width:1632px;height:1px;background:#dadcdd"></div>
<div class="r" style="left:26px;top:508px;width:1632px;height:1px;background:#dadcdd"></div>
<div class="r" style="left:26px;top:528px;width:1632px;height:1px;background:#dadcdd"></div>
<div class="r" style="left:26px;top:548px;width:1632px;height:1px;background:#dadcdd"></div>
<div class="r" style="left:26px;top:568px;width:1632px;height:1px;background:#dadcdd"></div>
<div class="r" style="left:26px;top:588px;width:1632px;height:1px;background:#dadcdd"></div>
<div class="r" style="left:26px;top:608px;width:1632px;height:1px;background:#dadcdd"></div>
<div class="r" style="left:26px;top:628px;width:1632px;height:1px;background:#dadcdd"></div>
<div class="r" style="left:26px;top:648px;width:1632px;height:1px;background:#dadcdd"></div>
<div class="r" style="left:26px;top:668px;width:1632px;height:1px;background:#dadcdd"></div>
<div class="r" style="left:26px;top:688px;width:1632px;height:1px;background:#dadcdd"></div>
<div class="r" style="left:26px;top:708px;width:1632px;height:1px;background:#dadcdd"></div>
<div class="r" style="left:26px;top:728px;width:1632px;height:1px;background:#dadcdd"></div>
<div class="r" style="left:26px;top:748px;width:1632px;height:1px;background:#dadcdd"></div>
<div class="r" style="left:26px;top:768px;width:1632px;height:1px;background:#dadcdd"></div>
<div class="r" style="left:26px;top:788px;width:1632px;height:1px;background:#dadcdd"></div>
<div class="r" style="left:26px;top:808px;width:1632px;height:1px;background:#dadcdd"></div>
<div class="r" style="left:26px;top:828px;width:1632px;height:1px;background:#dadcdd"></div>
<div class="r" style="left:26px;top:848px;width:1632px;height:1px;background:#dadcdd"></div>
<div class="r" style="left:26px;top:868px;width:1632px;height:1px;background:#dadcdd"></div>
<div class="r" style="left:26px;top:888px;width:1632px;height:1px;background:#dadcdd"></div>
<div class="r" style="left:26px;top:908px;width:1632px;height:1px;background:#dadcdd"></div>
<div class="r" style="left:26px;top:928px;width:1632px;height:1px;background:#dadcdd"></div>
<div class="r" style="left:26px;top:948px;width:1632px;height:1px;background:#dadcdd"></div>
<div class="r" style="left:207px;top:229px;width:1px;height:731px;background:#dadcdd"></div>
<div class="r" style="left:207px;top:208px;width:1px;height:20px;background:#dadcdd"></div>
<div class="r" style="left:305px;top:229px;width:1px;height:731px;background:#dadcdd"></div>
<div class="r" style="left:305px;top:208px;width:1px;height:20px;background:#dadcdd"></div>
<div class="r" style="left:403px;top:229px;width:1px;height:731px;background:#dadcdd"></div>
<div class="r" style="left:403px;top:208px;width:1px;height:20px;background:#dadcdd"></div>
<div class="r" style="left:585px;top:229px;width:1px;height:731px;background:#dadcdd"></div>
<div class="r" style="left:585px;top:208px;width:1px;height:20px;background:#dadcdd"></div>
<div class="r" style="left:655px;top:229px;width:1px;height:731px;background:#dadcdd"></div>
<div class="r" style="left:655px;top:208px;width:1px;height:20px;background:#dadcdd"></div>
<div class="r" style="left:809px;top:229px;width:1px;height:731px;background:#dadcdd"></div>
<div class="r" style="left:809px;top:208px;width:1px;height:20px;background:#dadcdd"></div>
<div class="r" style="left:873px;top:229px;width:1px;height:731px;background:#dadcdd"></div>
<div class="r" style="left:873px;top:208px;width:1px;height:20px;background:#dadcdd"></div>
<div class="r" style="left:937px;top:229px;width:1px;height:731px;background:#dadcdd"></div>
<div class="r" style="left:937px;top:208px;width:1px;height:20px;background:#dadcdd"></div>
<div class="r" style="left:1001px;top:229px;width:1px;height:731px;background:#dadcdd"></div>
<div class="r" style="left:1001px;top:208px;width:1px;height:20px;background:#dadcdd"></div>
<div class="r" style="left:1065px;top:229px;width:1px;height:731px;background:#dadcdd"></div>
<div class="r" style="left:1065px;top:208px;width:1px;height:20px;background:#dadcdd"></div>
<div class="r" style="left:1129px;top:229px;width:1px;height:731px;background:#dadcdd"></div>
<div class="r" style="left:1129px;top:208px;width:1px;height:20px;background:#dadcdd"></div>
<div class="r" style="left:1193px;top:229px;width:1px;height:731px;background:#dadcdd"></div>
<div class="r" style="left:1193px;top:208px;width:1px;height:20px;background:#dadcdd"></div>
<div class="r" style="left:1257px;top:229px;width:1px;height:731px;background:#dadcdd"></div>
<div class="r" style="left:1257px;top:208px;width:1px;height:20px;background:#dadcdd"></div>
<div class="r" style="left:1321px;top:229px;width:1px;height:731px;background:#dadcdd"></div>
<div class="r" style="left:1321px;top:208px;width:1px;height:20px;background:#dadcdd"></div>
<div class="r" style="left:1385px;top:229px;width:1px;height:731px;background:#dadcdd"></div>
<div class="r" style="left:1385px;top:208px;width:1px;height:20px;background:#dadcdd"></div>
<div class="r" style="left:1449px;top:229px;width:1px;height:731px;background:#dadcdd"></div>
<div class="r" style="left:1449px;top:208px;width:1px;height:20px;background:#dadcdd"></div>
<div class="r" style="left:1513px;top:229px;width:1px;height:731px;background:#dadcdd"></div>
<div class="r" style="left:1513px;top:208px;width:1px;height:20px;background:#dadcdd"></div>
<div class="r" style="left:1577px;top:229px;width:1px;height:731px;background:#dadcdd"></div>
<div class="r" style="left:1577px;top:208px;width:1px;height:20px;background:#dadcdd"></div>
<div class="r" style="left:1641px;top:229px;width:1px;height:731px;background:#dadcdd"></div>
<div class="r" style="left:1641px;top:208px;width:1px;height:20px;background:#dadcdd"></div>
<div class="r" style="left:0px;top:228px;width:1659px;height:1px;background:#ababab"></div>
<div class="r" style="left:25px;top:209px;width:1px;height:751px;background:#ababab"></div>
<div class="r" style="left:1658px;top:228px;width:1px;height:733px;background:#ababab"></div>
<div class="r" style="left:0px;top:960px;width:1659px;height:1px;background:#ababab"></div>
<div class="r" style="left:0px;top:248px;width:25px;height:1px;background:#dadcdd"></div>
<div class="r" style="left:0px;top:268px;width:25px;height:1px;background:#dadcdd"></div>
<div class="r" style="left:0px;top:288px;width:25px;height:1px;background:#dadcdd"></div>
<div class="r" style="left:0px;top:308px;width:25px;height:1px;background:#dadcdd"></div>
<div class="r" style="left:0px;top:328px;width:25px;height:1px;background:#dadcdd"></div>
<div class="r" style="left:0px;top:348px;width:25px;height:1px;background:#dadcdd"></div>
<div class="r" style="left:0px;top:368px;width:25px;height:1px;background:#dadcdd"></div>
<div class="r" style="left:0px;top:388px;width:25px;height:1px;background:#dadcdd"></div>
<div class="r" style="left:0px;top:408px;width:25px;height:1px;background:#dadcdd"></div>
<div class="r" style="left:0px;top:428px;width:25px;height:1px;background:#dadcdd"></div>
<div class="r" style="left:0px;top:448px;width:25px;height:1px;background:#dadcdd"></div>
<div class="r" style="left:0px;top:468px;width:25px;height:1px;background:#dadcdd"></div>
<div class="r" style="left:0px;top:488px;width:25px;height:1px;background:#dadcdd"></div>
<div class="r" style="left:0px;top:508px;width:25px;height:1px;background:#dadcdd"></div>
<div class="r" style="left:0px;top:528px;width:25px;height:1px;background:#dadcdd"></div>
<div class="r" style="left:0px;top:548px;width:25px;height:1px;background:#dadcdd"></div>
<div class="r" style="left:0px;top:568px;width:25px;height:1px;background:#dadcdd"></div>
<div class="r" style="left:0px;top:588px;width:25px;height:1px;background:#dadcdd"></div>
<div class="r" style="left:0px;top:608px;width:25px;height:1px;background:#dadcdd"></div>
<div class="r" style="left:0px;top:628px;width:25px;height:1px;background:#dadcdd"></div>
<div class="r" style="left:0px;top:648px;width:25px;height:1px;background:#dadcdd"></div>
<div class="r" style="left:0px;top:668px;width:25px;height:1px;background:#dadcdd"></div>
<div class="r" style="left:0px;top:688px;width:25px;height:1px;background:#dadcdd"></div>
<div class="r" style="left:0px;top:708px;width:25px;height:1px;background:#dadcdd"></div>
<div class="r" style="left:0px;top:728px;width:25px;height:1px;background:#dadcdd"></div>
<div class="r" style="left:0px;top:748px;width:25px;height:1px;background:#dadcdd"></div>
<div class="r" style="left:0px;top:768px;width:25px;height:1px;background:#dadcdd"></div>
<div class="r" style="left:0px;top:788px;width:25px;height:1px;background:#dadcdd"></div>
<div class="r" style="left:0px;top:808px;width:25px;height:1px;background:#dadcdd"></div>
<div class="r" style="left:0px;top:828px;width:25px;height:1px;background:#dadcdd"></div>
<div class="r" style="left:0px;top:848px;width:25px;height:1px;background:#dadcdd"></div>
<div class="r" style="left:0px;top:868px;width:25px;height:1px;background:#dadcdd"></div>
<div class="r" style="left:0px;top:888px;width:25px;height:1px;background:#dadcdd"></div>
<div class="r" style="left:0px;top:908px;width:25px;height:1px;background:#dadcdd"></div>
<div class="r" style="left:0px;top:928px;width:25px;height:1px;background:#dadcdd"></div>
<div class="r" style="left:0px;top:948px;width:25px;height:1px;background:#dadcdd"></div>
<div class="t" style="left:112.18px;top:213.00px;font-size:12px;line-height:12px;color:#217346;font-weight:700;">A</div>
<div class="t" style="left:252.51px;top:213.00px;font-size:12px;line-height:12px;color:#444;font-weight:400;">B</div>
<div class="t" style="left:350.18px;top:213.00px;font-size:12px;line-height:12px;color:#444;font-weight:400;">C</div>
<div class="t" style="left:490.18px;top:213.00px;font-size:12px;line-height:12px;color:#444;font-weight:400;">D</div>
<div class="t" style="left:616.51px;top:213.00px;font-size:12px;line-height:12px;color:#444;font-weight:400;">E</div>
<div class="t" style="left:728.84px;top:213.00px;font-size:12px;line-height:12px;color:#444;font-weight:400;">F</div>
<div class="t" style="left:836.82px;top:213.00px;font-size:12px;line-height:12px;color:#444;font-weight:400;">G</div>
<div class="t" style="left:901.18px;top:213.00px;font-size:12px;line-height:12px;color:#444;font-weight:400;">H</div>
<div class="t" style="left:967.82px;top:213.00px;font-size:12px;line-height:12px;color:#444;font-weight:400;">I</div>
<div class="t" style="left:1030.50px;top:213.00px;font-size:12px;line-height:12px;color:#444;font-weight:400;">J</div>
<div class="t" style="left:1093.51px;top:213.00px;font-size:12px;line-height:12px;color:#444;font-weight:400;">K</div>
<div class="t" style="left:1158.17px;top:213.00px;font-size:12px;line-height:12px;color:#444;font-weight:400;">L</div>
<div class="t" style="left:1220.49px;top:213.00px;font-size:12px;line-height:12px;color:#444;font-weight:400;">M</div>
<div class="t" style="left:1285.18px;top:213.00px;font-size:12px;line-height:12px;color:#444;font-weight:400;">N</div>
<div class="t" style="left:1348.82px;top:213.00px;font-size:12px;line-height:12px;color:#444;font-weight:400;">O</div>
<div class="t" style="left:1413.51px;top:213.00px;font-size:12px;line-height:12px;color:#444;font-weight:400;">P</div>
<div class="t" style="left:1476.82px;top:213.00px;font-size:12px;line-height:12px;color:#444;font-weight:400;">Q</div>
<div class="t" style="left:1541.18px;top:213.00px;font-size:12px;line-height:12px;color:#444;font-weight:400;">R</div>
<div class="t" style="left:1605.51px;top:213.00px;font-size:12px;line-height:12px;color:#444;font-weight:400;">S</div>
<div class="t" style="left:9.17px;top:234.00px;font-size:12px;line-height:12px;color:#217346;font-weight:700;">1</div>
<div class="t" style="left:9.17px;top:254.00px;font-size:12px;line-height:12px;color:#444;font-weight:400;">2</div>
<div class="t" style="left:9.17px;top:274.00px;font-size:12px;line-height:12px;color:#444;font-weight:400;">3</div>
<div class="t" style="left:9.17px;top:294.00px;font-size:12px;line-height:12px;color:#444;font-weight:400;">4</div>
<div class="t" style="left:9.17px;top:314.00px;font-size:12px;line-height:12px;color:#444;font-weight:400;">5</div>
<div class="t" style="left:9.17px;top:334.00px;font-size:12px;line-height:12px;color:#444;font-weight:400;">6</div>
<div class="t" style="left:9.17px;top:354.00px;font-size:12px;line-height:12px;color:#444;font-weight:400;">7</div>
<div class="t" style="left:9.17px;top:374.00px;font-size:12px;line-height:12px;color:#444;font-weight:400;">8</div>
<div class="t" style="left:9.17px;top:394.00px;font-size:12px;line-height:12px;color:#444;font-weight:400;">9</div>
<div class="t" style="left:5.84px;top:414.00px;font-size:12px;line-height:12px;color:#444;font-weight:400;">10</div>
<div class="t" style="left:6.26px;top:434.00px;font-size:12px;line-height:12px;color:#444;font-weight:400;">11</div>
<div class="t" style="left:5.84px;top:454.00px;font-size:12px;line-height:12px;color:#444;font-weight:400;">12</div>
<div class="t" style="left:5.84px;top:474.00px;font-size:12px;line-height:12px;color:#444;font-weight:400;">13</div>
<div class="t" style="left:5.84px;top:494.00px;font-size:12px;line-height:12px;color:#444;font-weight:400;">14</div>
<div class="t" style="left:5.84px;top:514.00px;font-size:12px;line-height:12px;color:#444;font-weight:400;">15</div>
<div class="t" style="left:5.84px;top:534.00px;font-size:12px;line-height:12px;color:#444;font-weight:400;">16</div>
<div class="t" style="left:5.84px;top:554.00px;font-size:12px;line-height:12px;color:#444;font-weight:400;">17</div>
<div class="t" style="left:5.84px;top:574.00px;font-size:12px;line-height:12px;color:#444;font-weight:400;">18</div>
<div class="t" style="left:5.84px;top:594.00px;font-size:12px;line-height:12px;color:#444;font-weight:400;">19</div>
<div class="t" style="left:5.84px;top:614.00px;font-size:12px;line-height:12px;color:#444;font-weight:400;">20</div>
<div class="t" style="left:5.84px;top:634.00px;font-size:12px;line-height:12px;color:#444;font-weight:400;">21</div>
<div class="t" style="left:5.84px;top:654.00px;font-size:12px;line-height:12px;color:#444;font-weight:400;">22</div>
<div class="t" style="left:5.84px;top:674.00px;font-size:12px;line-height:12px;color:#444;font-weight:400;">23</div>
<div class="t" style="left:5.84px;top:694.00px;font-size:12px;line-height:12px;color:#444;font-weight:400;">24</div>
<div class="t" style="left:5.84px;top:714.00px;font-size:12px;line-height:12px;color:#444;font-weight:400;">25</div>
<div class="t" style="left:5.84px;top:734.00px;font-size:12px;line-height:12px;color:#444;font-weight:400;">26</div>
<div class="t" style="left:5.84px;top:754.00px;font-size:12px;line-height:12px;color:#444;font-weight:400;">27</div>
<div class="t" style="left:5.84px;top:774.00px;font-size:12px;line-height:12px;color:#444;font-weight:400;">28</div>
<div class="t" style="left:5.84px;top:794.00px;font-size:12px;line-height:12px;color:#444;font-weight:400;">29</div>
<div class="t" style="left:5.84px;top:814.00px;font-size:12px;line-height:12px;color:#444;font-weight:400;">30</div>
<div class="t" style="left:5.84px;top:834.00px;font-size:12px;line-height:12px;color:#444;font-weight:400;">31</div>
<div class="t" style="left:5.84px;top:854.00px;font-size:12px;line-height:12px;color:#444;font-weight:400;">32</div>
<div class="t" style="left:5.84px;top:874.00px;font-size:12px;line-height:12px;color:#444;font-weight:400;">33</div>
<div class="t" style="left:5.84px;top:894.00px;font-size:12px;line-height:12px;color:#444;font-weight:400;">34</div>
<div class="t" style="left:5.84px;top:914.00px;font-size:12px;line-height:12px;color:#444;font-weight:400;">35</div>
<div class="t" style="left:5.84px;top:934.00px;font-size:12px;line-height:12px;color:#444;font-weight:400;">36</div>
<div class="t" style="left:5.84px;top:954.00px;font-size:12px;line-height:12px;color:#444;font-weight:400;">37</div>
<div class="r" style="left:26px;top:229px;width:784px;height:20px;background:#1f4e78"></div>
<div class="t" style="left:70.40px;top:234.00px;font-size:12.5px;line-height:12.5px;color:#fff;font-weight:700;transform:scaleX(1.0516);">timestamp_utc</div>
<div class="t" style="left:219.00px;top:234.00px;font-size:12.5px;line-height:12.5px;color:#fff;font-weight:700;transform:scaleX(1.0284);">chain_name</div>
<div class="t" style="left:310.70px;top:234.00px;font-size:12.5px;line-height:12.5px;color:#fff;font-weight:700;transform:scaleX(1.0312);">block_number</div>
<div class="t" style="left:428.60px;top:234.00px;font-size:12.5px;line-height:12.5px;color:#fff;font-weight:700;transform:scaleX(1.0390);">block_timestamp_utc</div>
<div class="t" style="left:594.10px;top:234.00px;font-size:12.5px;line-height:12.5px;color:#fff;font-weight:700;transform:scaleX(1.0353);">tx_count</div>
<div class="t" style="left:686.30px;top:234.00px;font-size:12.5px;line-height:12.5px;color:#fff;font-weight:700;transform:scaleX(1.0432);">balance_native</div>
<div class="r" style="left:0;top:229px;width:1658px;height:731px;overflow:hidden">
<div class="t g" style="left:28.40px;top:25.00px;font-size:12.5px;line-height:12.5px;color:#000;font-weight:400;transform:scaleX(1.0215);">2025-12-05T06:50:39.758172</div>
<div class="t g" style="left:210.40px;top:25.00px;font-size:12.5px;line-height:12.5px;color:#000;font-weight:400;transform:scaleX(1.0844);">Polygon</div>
<div class="t g" style="left:345.40px;top:25.00px;font-size:12.5px;line-height:12.5px;color:#000;font-weight:400;transform:scaleX(0.9888);">79906198</div>
<div class="t g" style="left:406.40px;top:25.00px;font-size:12.5px;line-height:12.5px;color:#000;font-weight:400;transform:scaleX(1.0146);">2025-12-05T06:50:37</div>
<div class="t g" style="left:632.40px;top:25.00px;font-size:12.5px;line-height:12.5px;color:#000;font-weight:400;transform:scaleX(0.9581);">124</div>
<div class="t g" style="left:711.40px;top:25.00px;font-size:12.5px;line-height:12.5px;color:#000;font-weight:400;transform:scaleX(1.0222);">91317.31911508</div>
<div class="t g" style="left:28.40px;top:45.00px;font-size:12.5px;line-height:12.5px;color:#000;font-weight:400;transform:scaleX(1.0215);">2025-12-05T06:50:40.251910</div>
<div class="t g" style="left:210.40px;top:45.00px;font-size:12.5px;line-height:12.5px;color:#000;font-weight:400;transform:scaleX(0.8876);">BSC</div>
<div class="t g" style="left:345.40px;top:45.00px;font-size:12.5px;line-height:12.5px;color:#000;font-weight:400;transform:scaleX(0.9888);">70554478</div>
<div class="t g" style="left:406.40px;top:45.00px;font-size:12.5px;line-height:12.5px;color:#000;font-weight:400;transform:scaleX(1.0146);">2025-12-05T06:50:39</div>
<div class="t g" style="left:639.40px;top:45.00px;font-size:12.5px;line-height:12.5px;color:#000;font-weight:400;transform:scaleX(0.9369);">94</div>
<div class="t g" style="left:711.40px;top:45.00px;font-size:12.5px;line-height:12.5px;color:#000;font-weight:400;transform:scaleX(1.0120);">99226.97398430</div>
<div class="t g" style="left:28.40px;top:65.00px;font-size:12.5px;line-height:12.5px;color:#000;font-weight:400;transform:scaleX(1.0215);">2025-12-05T06:50:41.042029</div>
<div class="t g" style="left:210.40px;top:65.00px;font-size:12.5px;line-height:12.5px;color:#000;font-weight:400;transform:scaleX(1.1683);">Arbitrum</div>
<div class="t g" style="left:338.40px;top:65.00px;font-size:12.5px;line-height:12.5px;color:#000;font-weight:400;transform:scaleX(0.9910);">407348301</div>
<div class="t g" style="left:406.40px;top:65.00px;font-size:12.5px;line-height:12.5px;color:#000;font-weight:400;transform:scaleX(1.0146);">2025-12-05T06:50:39</div>
<div class="t g" style="left:639.40px;top:65.00px;font-size:12.5px;line-height:12.5px;color:#000;font-weight:400;transform:scaleX(0.9369);">16</div>
<div class="t g" style="left:732.40px;top:65.00px;font-size:12.5px;line-height:12.5px;color:#000;font-weight:400;transform:scaleX(1.0269);">25.41128648</div>
<div class="t g" style="left:28.40px;top:85.00px;font-size:12.5px;line-height:12.5px;color:#000;font-weight:400;transform:scaleX(1.0215);">2025-12-05T06:50:41.592391</div>
<div class="t g" style="left:210.40px;top:85.00px;font-size:12.5px;line-height:12.5px;color:#000;font-weight:400;transform:scaleX(1.1412);">Optimism</div>
<div class="t g" style="left:338.40px;top:85.00px;font-size:12.5px;line-height:12.5px;color:#000;font-weight:400;transform:scaleX(0.9910);">144659332</div>
<div class="t g" style="left:406.40px;top:85.00px;font-size:12.5px;line-height:12.5px;color:#000;font-weight:400;transform:scaleX(1.0146);">2025-12-05T06:50:41</div>
<div class="t g" style="left:639.40px;top:85.00px;font-size:12.5px;line-height:12.5px;color:#000;font-weight:400;transform:scaleX(0.9369);">16</div>
<div class="t g" style="left:739.40px;top:85.00px;font-size:12.5px;line-height:12.5px;color:#000;font-weight:400;transform:scaleX(1.0142);">1.77527464</div>
<div class="t g" style="left:28.40px;top:105.00px;font-size:12.5px;line-height:12.5px;color:#000;font-weight:400;transform:scaleX(1.0215);">2025-12-05T06:50:42.149466</div>
<div class="t g" style="left:210.40px;top:105.00px;font-size:12.5px;line-height:12.5px;color:#000;font-weight:400;transform:scaleX(1.0873);">Avalanche</div>
<div class="t g" style="left:345.40px;top:105.00px;font-size:12.5px;line-height:12.5px;color:#000;font-weight:400;transform:scaleX(0.9888);">73137356</div>
<div class="t g" style="left:406.40px;top:105.00px;font-size:12.5px;line-height:12.5px;color:#000;font-weight:400;transform:scaleX(1.0146);">2025-12-05T06:50:36</div>
<div class="t g" style="left:639.40px;top:105.00px;font-size:12.5px;line-height:12.5px;color:#000;font-weight:400;transform:scaleX(0.9369);">30</div>
<div class="t g" style="left:725.40px;top:105.00px;font-size:12.5px;line-height:12.5px;color:#000;font-weight:400;transform:scaleX(1.0133);">494.02043933</div>
<div class="t g" style="left:28.40px;top:125.00px;font-size:12.5px;line-height:12.5px;color:#000;font-weight:400;transform:scaleX(1.0215);">2025-12-05T06:50:42.653015</div>
<div class="t g" style="left:210.40px;top:125.00px;font-size:12.5px;line-height:12.5px;color:#000;font-weight:400;transform:scaleX(1.0926);">Fantom</div>
<div class="t g" style="left:338.40px;top:125.00px;font-size:12.5px;line-height:12.5px;color:#000;font-weight:400;transform:scaleX(1.0061);">118409809</div>
<div class="t g" style="left:406.40px;top:125.00px;font-size:12.5px;line-height:12.5px;color:#000;font-weight:400;transform:scaleX(1.0146);">2025-12-05T06:50:35</div>
<div class="t g" style="left:646.40px;top:125.00px;font-size:12.5px;line-height:12.5px;color:#000;font-weight:400;transform:scaleX(0.8649);">1</div>
<div class="t g" style="left:676.40px;top:125.00px;font-size:12.5px;line-height:12.5px;color:#000;font-weight:400;transform:scaleX(1.0107);">2553823566.56619000</div>
<div class="t g" style="left:28.40px;top:145.00px;font-size:12.5px;line-height:12.5px;color:#000;font-weight:400;transform:scaleX(1.0215);">2025-12-05T06:50:43.175544</div>
<div class="t g" style="left:210.40px;top:145.00px;font-size:12.5px;line-height:12.5px;color:#000;font-weight:400;transform:scaleX(1.0444);">Gnosis</div>
<div class="t g" style="left:345.40px;top:145.00px;font-size:12.5px;line-height:12.5px;color:#000;font-weight:400;transform:scaleX(0.9888);">43489377</div>
<div class="t g" style="left:406.40px;top:145.00px;font-size:12.5px;line-height:12.5px;color:#000;font-weight:400;transform:scaleX(1.0146);">2025-12-05T06:50:40</div>
<div class="t g" style="left:646.40px;top:145.00px;font-size:12.5px;line-height:12.5px;color:#000;font-weight:400;transform:scaleX(0.8649);">6</div>
<div class="t g" style="left:676.40px;top:145.00px;font-size:12.5px;line-height:12.5px;color:#000;font-weight:400;transform:scaleX(1.0181);">1134265334.13343000</div>
<div class="t g" style="left:28.40px;top:165.00px;font-size:12.5px;line-height:12.5px;color:#000;font-weight:400;transform:scaleX(1.0215);">2025-12-05T06:50:43.772080</div>
<div class="t g" style="left:210.40px;top:165.00px;font-size:12.5px;line-height:12.5px;color:#000;font-weight:400;transform:scaleX(1.0592);">Cronos</div>
<div class="t g" style="left:345.40px;top:165.00px;font-size:12.5px;line-height:12.5px;color:#000;font-weight:400;transform:scaleX(0.9888);">43506789</div>
<div class="t g" style="left:406.40px;top:165.00px;font-size:12.5px;line-height:12.5px;color:#000;font-weight:400;transform:scaleX(1.0146);">2025-12-05T06:50:41</div>
<div class="t g" style="left:646.40px;top:165.00px;font-size:12.5px;line-height:12.5px;color:#000;font-weight:400;transform:scaleX(0.8649);">0</div>
<div class="t g" style="left:711.40px;top:165.00px;font-size:12.5px;line-height:12.5px;color:#000;font-weight:400;transform:scaleX(1.0120);">76862.85166795</div>
<div class="t g" style="left:28.40px;top:185.00px;font-size:12.5px;line-height:12.5px;color:#000;font-weight:400;transform:scaleX(1.0215);">2025-12-05T06:50:44.366750</div>
<div class="t g" style="left:210.40px;top:185.00px;font-size:12.5px;line-height:12.5px;color:#000;font-weight:400;transform:scaleX(1.0745);">Celo</div>
<div class="t g" style="left:345.40px;top:185.00px;font-size:12.5px;line-height:12.5px;color:#000;font-weight:400;transform:scaleX(0.9888);">53016682</div>
<div class="t g" style="left:406.40px;top:185.00px;font-size:12.5px;line-height:12.5px;color:#000;font-weight:400;transform:scaleX(1.0146);">2025-12-05T06:50:40</div>
<div class="t g" style="left:639.40px;top:185.00px;font-size:12.5px;line-height:12.5px;color:#000;font-weight:400;transform:scaleX(0.9369);">36</div>
<div class="t g" style="left:725.40px;top:185.00px;font-size:12.5px;line-height:12.5px;color:#000;font-weight:400;transform:scaleX(1.0133);">359.44526692</div>
<div class="t g" style="left:28.40px;top:205.00px;font-size:12.5px;line-height:12.5px;color:#000;font-weight:400;transform:scaleX(1.0332);">2025-12-05T06:51:04.922111</div>
<div class="t g" style="left:210.40px;top:205.00px;font-size:12.5px;line-height:12.5px;color:#000;font-weight:400;transform:scaleX(1.0844);">Polygon</div>
<div class="t g" style="left:345.40px;top:205.00px;font-size:12.5px;line-height:12.5px;color:#000;font-weight:400;transform:scaleX(1.0057);">79906211</div>
<div class="t g" style="left:406.40px;top:205.00px;font-size:12.5px;line-height:12.5px;color:#000;font-weight:400;transform:scaleX(1.0146);">2025-12-05T06:51:03</div>
<div class="t g" style="left:632.40px;top:205.00px;font-size:12.5px;line-height:12.5px;color:#000;font-weight:400;transform:scaleX(0.9581);">107</div>
<div class="t g" style="left:711.40px;top:205.00px;font-size:12.5px;line-height:12.5px;color:#000;font-weight:400;transform:scaleX(1.0222);">91317.31911508</div>
<div class="t g" style="left:28.40px;top:225.00px;font-size:12.5px;line-height:12.5px;color:#000;font-weight:400;transform:scaleX(1.0215);">2025-12-05T06:51:05.438020</div>
<div class="t g" style="left:210.40px;top:225.00px;font-size:12.5px;line-height:12.5px;color:#000;font-weight:400;transform:scaleX(0.8876);">BSC</div>
<div class="t g" style="left:345.40px;top:225.00px;font-size:12.5px;line-height:12.5px;color:#000;font-weight:400;transform:scaleX(0.9888);">70554512</div>
<div class="t g" style="left:406.40px;top:225.00px;font-size:12.5px;line-height:12.5px;color:#000;font-weight:400;transform:scaleX(1.0146);">2025-12-05T06:51:04</div>
<div class="t g" style="left:632.40px;top:225.00px;font-size:12.5px;line-height:12.5px;color:#000;font-weight:400;">112</div>
<div class="t g" style="left:711.40px;top:225.00px;font-size:12.5px;line-height:12.5px;color:#000;font-weight:400;transform:scaleX(1.0120);">99226.97398430</div>
<div class="t g" style="left:28.40px;top:245.00px;font-size:12.5px;line-height:12.5px;color:#000;font-weight:400;transform:scaleX(1.0215);">2025-12-05T06:51:06.280293</div>
<div class="t g" style="left:210.40px;top:245.00px;font-size:12.5px;line-height:12.5px;color:#000;font-weight:400;transform:scaleX(1.1683);">Arbitrum</div>
<div class="t g" style="left:338.40px;top:245.00px;font-size:12.5px;line-height:12.5px;color:#000;font-weight:400;transform:scaleX(0.9910);">407348403</div>
<div class="t g" style="left:406.40px;top:245.00px;font-size:12.5px;line-height:12.5px;color:#000;font-weight:400;transform:scaleX(1.0146);">2025-12-05T06:51:05</div>
<div class="t g" style="left:639.40px;top:245.00px;font-size:12.5px;line-height:12.5px;color:#000;font-weight:400;transform:scaleX(0.9369);">28</div>
<div class="t g" style="left:732.40px;top:245.00px;font-size:12.5px;line-height:12.5px;color:#000;font-weight:400;transform:scaleX(1.0269);">25.41128648</div>
<div class="t g" style="left:28.40px;top:265.00px;font-size:12.5px;line-height:12.5px;color:#000;font-weight:400;transform:scaleX(1.0215);">2025-12-05T06:51:06.848908</div>
<div class="t g" style="left:210.40px;top:265.00px;font-size:12.5px;line-height:12.5px;color:#000;font-weight:400;transform:scaleX(1.1412);">Optimism</div>
<div class="t g" style="left:338.40px;top:265.00px;font-size:12.5px;line-height:12.5px;color:#000;font-weight:400;transform:scaleX(0.9910);">144659344</div>
<div class="t g" style="left:406.40px;top:265.00px;font-size:12.5px;line-height:12.5px;color:#000;font-weight:400;transform:scaleX(1.0146);">2025-12-05T06:51:05</div>
<div class="t g" style="left:639.40px;top:265.00px;font-size:12.5px;line-height:12.5px;color:#000;font-weight:400;transform:scaleX(0.9369);">15</div>
<div class="t g" style="left:739.40px;top:265.00px;font-size:12.5px;line-height:12.5px;color:#000;font-weight:400;transform:scaleX(1.0142);">1.77527464</div>
<div class="t g" style="left:28.40px;top:285.00px;font-size:12.5px;line-height:12.5px;color:#000;font-weight:400;transform:scaleX(1.0215);">2025-12-05T06:51:07.429086</div>
<div class="t g" style="left:210.40px;top:285.00px;font-size:12.5px;line-height:12.5px;color:#000;font-weight:400;transform:scaleX(1.0873);">Avalanche</div>
<div class="t g" style="left:345.40px;top:285.00px;font-size:12.5px;line-height:12.5px;color:#000;font-weight:400;transform:scaleX(0.9888);">73137375</div>
<div class="t g" style="left:406.40px;top:285.00px;font-size:12.5px;line-height:12.5px;color:#000;font-weight:400;transform:scaleX(1.0146);">2025-12-05T06:51:00</div>
<div class="t g" style="left:639.40px;top:285.00px;font-size:12.5px;line-height:12.5px;color:#000;font-weight:400;transform:scaleX(0.9369);">41</div>
<div class="t g" style="left:725.40px;top:285.00px;font-size:12.5px;line-height:12.5px;color:#000;font-weight:400;transform:scaleX(1.0133);">494.02043933</div>
<div class="t g" style="left:28.40px;top:305.00px;font-size:12.5px;line-height:12.5px;color:#000;font-weight:400;transform:scaleX(1.0215);">2025-12-05T06:51:07.940820</div>
<div class="t g" style="left:210.40px;top:305.00px;font-size:12.5px;line-height:12.5px;color:#000;font-weight:400;transform:scaleX(1.0926);">Fantom</div>
<div class="t g" style="left:338.40px;top:305.00px;font-size:12.5px;line-height:12.5px;color:#000;font-weight:400;transform:scaleX(1.0061);">118409820</div>
<div class="t g" style="left:406.40px;top:305.00px;font-size:12.5px;line-height:12.5px;color:#000;font-weight:400;transform:scaleX(1.0146);">2025-12-05T06:51:03</div>
<div class="t g" style="left:646.40px;top:305.00px;font-size:12.5px;line-height:12.5px;color:#000;font-weight:400;transform:scaleX(0.8649);">1</div>
<div class="t g" style="left:676.40px;top:305.00px;font-size:12.5px;line-height:12.5px;color:#000;font-weight:400;transform:scaleX(1.0107);">2553823566.56619000</div>
<div class="t g" style="left:28.40px;top:325.00px;font-size:12.5px;line-height:12.5px;color:#000;font-weight:400;transform:scaleX(1.0215);">2025-12-05T06:51:08.434433</div>
<div class="t g" style="left:210.40px;top:325.00px;font-size:12.5px;line-height:12.5px;color:#000;font-weight:400;transform:scaleX(1.0444);">Gnosis</div>
<div class="t g" style="left:345.40px;top:325.00px;font-size:12.5px;line-height:12.5px;color:#000;font-weight:400;transform:scaleX(0.9888);">43489382</div>
<div class="t g" style="left:406.40px;top:325.00px;font-size:12.5px;line-height:12.5px;color:#000;font-weight:400;transform:scaleX(1.0146);">2025-12-05T06:51:05</div>
<div class="t g" style="left:646.40px;top:325.00px;font-size:12.5px;line-height:12.5px;color:#000;font-weight:400;transform:scaleX(0.8649);">4</div>
<div class="t g" style="left:676.40px;top:325.00px;font-size:12.5px;line-height:12.5px;color:#000;font-weight:400;transform:scaleX(1.0181);">1134265334.13343000</div>
<div class="t g" style="left:28.40px;top:345.00px;font-size:12.5px;line-height:12.5px;color:#000;font-weight:400;transform:scaleX(1.0215);">2025-12-05T06:51:09.036781</div>
<div class="t g" style="left:210.40px;top:345.00px;font-size:12.5px;line-height:12.5px;color:#000;font-weight:400;transform:scaleX(1.0592);">Cronos</div>
<div class="t g" style="left:345.40px;top:345.00px;font-size:12.5px;line-height:12.5px;color:#000;font-weight:400;transform:scaleX(0.9888);">43506830</div>
<div class="t g" style="left:406.40px;top:345.00px;font-size:12.5px;line-height:12.5px;color:#000;font-weight:400;transform:scaleX(1.0146);">2025-12-05T06:51:07</div>
<div class="t g" style="left:646.40px;top:345.00px;font-size:12.5px;line-height:12.5px;color:#000;font-weight:400;transform:scaleX(0.8649);">4</div>
<div class="t g" style="left:711.40px;top:345.00px;font-size:12.5px;line-height:12.5px;color:#000;font-weight:400;transform:scaleX(1.0120);">76862.85166795</div>
<div class="t g" style="left:28.40px;top:365.00px;font-size:12.5px;line-height:12.5px;color:#000;font-weight:400;transform:scaleX(1.0215);">2025-12-05T06:51:09.547325</div>
<div class="t g" style="left:210.40px;top:365.00px;font-size:12.5px;line-height:12.5px;color:#000;font-weight:400;transform:scaleX(1.0745);">Celo</div>
<div class="t g" style="left:345.40px;top:365.00px;font-size:12.5px;line-height:12.5px;color:#000;font-weight:400;transform:scaleX(0.9888);">53016706</div>
<div class="t g" style="left:406.40px;top:365.00px;font-size:12.5px;line-height:12.5px;color:#000;font-weight:400;transform:scaleX(1.0146);">2025-12-05T06:51:04</div>
<div class="t g" style="left:639.40px;top:365.00px;font-size:12.5px;line-height:12.5px;color:#000;font-weight:400;transform:scaleX(0.9369);">43</div>
<div class="t g" style="left:725.40px;top:365.00px;font-size:12.5px;line-height:12.5px;color:#000;font-weight:400;transform:scaleX(1.0133);">359.44526692</div>
<div class="t g" style="left:28.40px;top:385.00px;font-size:12.5px;line-height:12.5px;color:#000;font-weight:400;transform:scaleX(1.0215);">2025-12-05T06:51:30.048455</div>
<div class="t g" style="left:210.40px;top:385.00px;font-size:12.5px;line-height:12.5px;color:#000;font-weight:400;transform:scaleX(1.0844);">Polygon</div>
<div class="t g" style="left:345.40px;top:385.00px;font-size:12.5px;line-height:12.5px;color:#000;font-weight:400;transform:scaleX(0.9888);">79906224</div>
<div class="t g" style="left:406.40px;top:385.00px;font-size:12.5px;line-height:12.5px;color:#000;font-weight:400;transform:scaleX(1.0146);">2025-12-05T06:51:29</div>
<div class="t g" style="left:632.40px;top:385.00px;font-size:12.5px;line-height:12.5px;color:#000;font-weight:400;transform:scaleX(0.9581);">133</div>
<div class="t g" style="left:711.40px;top:385.00px;font-size:12.5px;line-height:12.5px;color:#000;font-weight:400;transform:scaleX(1.0222);">91317.31911508</div>
<div class="t g" style="left:28.40px;top:405.00px;font-size:12.5px;line-height:12.5px;color:#000;font-weight:400;transform:scaleX(1.0215);">2025-12-05T06:51:30.545822</div>
<div class="t g" style="left:210.40px;top:405.00px;font-size:12.5px;line-height:12.5px;color:#000;font-weight:400;transform:scaleX(0.8876);">BSC</div>
<div class="t g" style="left:345.40px;top:405.00px;font-size:12.5px;line-height:12.5px;color:#000;font-weight:400;transform:scaleX(0.9888);">70554545</div>
<div class="t g" style="left:406.40px;top:405.00px;font-size:12.5px;line-height:12.5px;color:#000;font-weight:400;transform:scaleX(1.0146);">2025-12-05T06:51:29</div>
<div class="t g" style="left:639.40px;top:405.00px;font-size:12.5px;line-height:12.5px;color:#000;font-weight:400;transform:scaleX(0.9369);">75</div>
<div class="t g" style="left:711.40px;top:405.00px;font-size:12.5px;line-height:12.5px;color:#000;font-weight:400;transform:scaleX(1.0120);">99226.97398430</div>
<div class="t g" style="left:28.40px;top:425.00px;font-size:12.5px;line-height:12.5px;color:#000;font-weight:400;transform:scaleX(1.0215);">2025-12-05T06:51:31.366577</div>
<div class="t g" style="left:210.40px;top:425.00px;font-size:12.5px;line-height:12.5px;color:#000;font-weight:400;transform:scaleX(1.1683);">Arbitrum</div>
<div class="t g" style="left:338.40px;top:425.00px;font-size:12.5px;line-height:12.5px;color:#000;font-weight:400;transform:scaleX(0.9910);">407348502</div>
<div class="t g" style="left:406.40px;top:425.00px;font-size:12.5px;line-height:12.5px;color:#000;font-weight:400;transform:scaleX(1.0146);">2025-12-05T06:51:29</div>
<div class="t g" style="left:639.40px;top:425.00px;font-size:12.5px;line-height:12.5px;color:#000;font-weight:400;transform:scaleX(0.9369);">12</div>
<div class="t g" style="left:732.40px;top:425.00px;font-size:12.5px;line-height:12.5px;color:#000;font-weight:400;transform:scaleX(1.0269);">25.41128648</div>
<div class="t g" style="left:28.40px;top:445.00px;font-size:12.5px;line-height:12.5px;color:#000;font-weight:400;transform:scaleX(1.0215);">2025-12-05T06:51:31.971348</div>
<div class="t g" style="left:210.40px;top:445.00px;font-size:12.5px;line-height:12.5px;color:#000;font-weight:400;transform:scaleX(1.1412);">Optimism</div>
<div class="t g" style="left:338.40px;top:445.00px;font-size:12.5px;line-height:12.5px;color:#000;font-weight:400;transform:scaleX(0.9910);">144659357</div>
<div class="t g" style="left:406.40px;top:445.00px;font-size:12.5px;line-height:12.5px;color:#000;font-weight:400;transform:scaleX(1.0146);">2025-12-05T06:51:31</div>
<div class="t g" style="left:639.40px;top:445.00px;font-size:12.5px;line-height:12.5px;color:#000;font-weight:400;transform:scaleX(0.9369);">30</div>
<div class="t g" style="left:739.40px;top:445.00px;font-size:12.5px;line-height:12.5px;color:#000;font-weight:400;transform:scaleX(1.0142);">1.77527464</div>
<div class="t g" style="left:28.40px;top:465.00px;font-size:12.5px;line-height:12.5px;color:#000;font-weight:400;transform:scaleX(1.0274);">2025-12-05T06:51:32.520112</div>
<div class="t g" style="left:210.40px;top:465.00px;font-size:12.5px;line-height:12.5px;color:#000;font-weight:400;transform:scaleX(1.0873);">Avalanche</div>
<div class="t g" style="left:345.40px;top:465.00px;font-size:12.5px;line-height:12.5px;color:#000;font-weight:400;transform:scaleX(0.9888);">73137391</div>
<div class="t g" style="left:406.40px;top:465.00px;font-size:12.5px;line-height:12.5px;color:#000;font-weight:400;transform:scaleX(1.0146);">2025-12-05T06:51:21</div>
<div class="t g" style="left:639.40px;top:465.00px;font-size:12.5px;line-height:12.5px;color:#000;font-weight:400;transform:scaleX(0.9369);">30</div>
<div class="t g" style="left:725.40px;top:465.00px;font-size:12.5px;line-height:12.5px;color:#000;font-weight:400;transform:scaleX(1.0133);">494.02043933</div>
<div class="t g" style="left:28.40px;top:485.00px;font-size:12.5px;line-height:12.5px;color:#000;font-weight:400;transform:scaleX(1.0215);">2025-12-05T06:51:33.062083</div>
<div class="t g" style="left:210.40px;top:485.00px;font-size:12.5px;line-height:12.5px;color:#000;font-weight:400;transform:scaleX(1.0926);">Fantom</div>
<div class="t g" style="left:338.40px;top:485.00px;font-size:12.5px;line-height:12.5px;color:#000;font-weight:400;transform:scaleX(1.0061);">118409827</div>
<div class="t g" style="left:406.40px;top:485.00px;font-size:12.5px;line-height:12.5px;color:#000;font-weight:400;transform:scaleX(1.0146);">2025-12-05T06:51:27</div>
<div class="t g" style="left:646.40px;top:485.00px;font-size:12.5px;line-height:12.5px;color:#000;font-weight:400;transform:scaleX(0.8649);">1</div>
<div class="t g" style="left:676.40px;top:485.00px;font-size:12.5px;line-height:12.5px;color:#000;font-weight:400;transform:scaleX(1.0107);">2553823566.56619000</div>
<div class="t g" style="left:28.40px;top:505.00px;font-size:12.5px;line-height:12.5px;color:#000;font-weight:400;transform:scaleX(1.0215);">2025-12-05T06:51:33.567950</div>
<div class="t g" style="left:210.40px;top:505.00px;font-size:12.5px;line-height:12.5px;color:#000;font-weight:400;transform:scaleX(1.0444);">Gnosis</div>
<div class="t g" style="left:345.40px;top:505.00px;font-size:12.5px;line-height:12.5px;color:#000;font-weight:400;transform:scaleX(0.9888);">43489387</div>
<div class="t g" style="left:406.40px;top:505.00px;font-size:12.5px;line-height:12.5px;color:#000;font-weight:400;transform:scaleX(1.0146);">2025-12-05T06:51:30</div>
<div class="t g" style="left:639.40px;top:505.00px;font-size:12.5px;line-height:12.5px;color:#000;font-weight:400;transform:scaleX(0.9369);">13</div>
<div class="t g" style="left:676.40px;top:505.00px;font-size:12.5px;line-height:12.5px;color:#000;font-weight:400;transform:scaleX(1.0181);">1134265334.13343000</div>
<div class="t g" style="left:28.40px;top:525.00px;font-size:12.5px;line-height:12.5px;color:#000;font-weight:400;transform:scaleX(1.0215);">2025-12-05T06:51:34.167388</div>
<div class="t g" style="left:210.40px;top:525.00px;font-size:12.5px;line-height:12.5px;color:#000;font-weight:400;transform:scaleX(1.0592);">Cronos</div>
<div class="t g" style="left:345.40px;top:525.00px;font-size:12.5px;line-height:12.5px;color:#000;font-weight:400;transform:scaleX(0.9888);">43506871</div>
<div class="t g" style="left:406.40px;top:525.00px;font-size:12.5px;line-height:12.5px;color:#000;font-weight:400;transform:scaleX(1.0146);">2025-12-05T06:51:32</div>
<div class="t g" style="left:646.40px;top:525.00px;font-size:12.5px;line-height:12.5px;color:#000;font-weight:400;transform:scaleX(0.8649);">0</div>
<div class="t g" style="left:711.40px;top:525.00px;font-size:12.5px;line-height:12.5px;color:#000;font-weight:400;transform:scaleX(1.0120);">76862.85166795</div>
<div class="t g" style="left:28.40px;top:545.00px;font-size:12.5px;line-height:12.5px;color:#000;font-weight:400;transform:scaleX(1.0215);">2025-12-05T06:51:34.699524</div>
<div class="t g" style="left:210.40px;top:545.00px;font-size:12.5px;line-height:12.5px;color:#000;font-weight:400;transform:scaleX(1.0745);">Celo</div>
<div class="t g" style="left:345.40px;top:545.00px;font-size:12.5px;line-height:12.5px;color:#000;font-weight:400;transform:scaleX(0.9888);">53016730</div>
<div class="t g" style="left:406.40px;top:545.00px;font-size:12.5px;line-height:12.5px;color:#000;font-weight:400;transform:scaleX(1.0146);">2025-12-05T06:51:28</div>
<div class="t g" style="left:639.40px;top:545.00px;font-size:12.5px;line-height:12.5px;color:#000;font-weight:400;transform:scaleX(0.9369);">43</div>
<div class="t g" style="left:725.40px;top:545.00px;font-size:12.5px;line-height:12.5px;color:#000;font-weight:400;transform:scaleX(1.0133);">359.44526692</div>
<div class="t g" style="left:28.40px;top:565.00px;font-size:12.5px;line-height:12.5px;color:#000;font-weight:400;transform:scaleX(1.0215);">2025-12-05T06:51:55.158392</div>
<div class="t g" style="left:210.40px;top:565.00px;font-size:12.5px;line-height:12.5px;color:#000;font-weight:400;transform:scaleX(1.0844);">Polygon</div>
<div class="t g" style="left:345.40px;top:565.00px;font-size:12.5px;line-height:12.5px;color:#000;font-weight:400;transform:scaleX(0.9888);">79906235</div>
<div class="t g" style="left:406.40px;top:565.00px;font-size:12.5px;line-height:12.5px;color:#000;font-weight:400;transform:scaleX(1.0146);">2025-12-05T06:51:51</div>
<div class="t g" style="left:639.40px;top:565.00px;font-size:12.5px;line-height:12.5px;color:#000;font-weight:400;transform:scaleX(0.9369);">97</div>
<div class="t g" style="left:711.40px;top:565.00px;font-size:12.5px;line-height:12.5px;color:#000;font-weight:400;transform:scaleX(1.0222);">91317.31911508</div>
<div class="t g" style="left:28.40px;top:585.00px;font-size:12.5px;line-height:12.5px;color:#000;font-weight:400;transform:scaleX(1.0215);">2025-12-05T06:51:56.802530</div>
<div class="t g" style="left:210.40px;top:585.00px;font-size:12.5px;line-height:12.5px;color:#000;font-weight:400;transform:scaleX(0.8876);">BSC</div>
<div class="t g" style="left:345.40px;top:585.00px;font-size:12.5px;line-height:12.5px;color:#000;font-weight:400;transform:scaleX(0.9888);">70554580</div>
<div class="t g" style="left:406.40px;top:585.00px;font-size:12.5px;line-height:12.5px;color:#000;font-weight:400;transform:scaleX(1.0146);">2025-12-05T06:51:55</div>
<div class="t g" style="left:632.40px;top:585.00px;font-size:12.5px;line-height:12.5px;color:#000;font-weight:400;transform:scaleX(0.9581);">185</div>
<div class="t g" style="left:711.40px;top:585.00px;font-size:12.5px;line-height:12.5px;color:#000;font-weight:400;transform:scaleX(1.0120);">99226.97398430</div>
<div class="t g" style="left:28.40px;top:605.00px;font-size:12.5px;line-height:12.5px;color:#000;font-weight:400;transform:scaleX(1.0215);">2025-12-05T06:51:57.570738</div>
<div class="t g" style="left:210.40px;top:605.00px;font-size:12.5px;line-height:12.5px;color:#000;font-weight:400;transform:scaleX(1.1683);">Arbitrum</div>
<div class="t g" style="left:338.40px;top:605.00px;font-size:12.5px;line-height:12.5px;color:#000;font-weight:400;transform:scaleX(0.9910);">407348607</div>
<div class="t g" style="left:406.40px;top:605.00px;font-size:12.5px;line-height:12.5px;color:#000;font-weight:400;transform:scaleX(1.0146);">2025-12-05T06:51:56</div>
<div class="t g" style="left:639.40px;top:605.00px;font-size:12.5px;line-height:12.5px;color:#000;font-weight:400;transform:scaleX(0.9369);">12</div>
<div class="t g" style="left:732.40px;top:605.00px;font-size:12.5px;line-height:12.5px;color:#000;font-weight:400;transform:scaleX(1.0269);">25.41128648</div>
<div class="t g" style="left:28.40px;top:625.00px;font-size:12.5px;line-height:12.5px;color:#000;font-weight:400;transform:scaleX(1.0215);">2025-12-05T06:51:58.090402</div>
<div class="t g" style="left:210.40px;top:625.00px;font-size:12.5px;line-height:12.5px;color:#000;font-weight:400;transform:scaleX(1.1412);">Optimism</div>
<div class="t g" style="left:338.40px;top:625.00px;font-size:12.5px;line-height:12.5px;color:#000;font-weight:400;transform:scaleX(0.9910);">144659370</div>
<div class="t g" style="left:406.40px;top:625.00px;font-size:12.5px;line-height:12.5px;color:#000;font-weight:400;transform:scaleX(1.0146);">2025-12-05T06:51:57</div>
<div class="t g" style="left:639.40px;top:625.00px;font-size:12.5px;line-height:12.5px;color:#000;font-weight:400;transform:scaleX(0.9369);">40</div>
<div class="t g" style="left:739.40px;top:625.00px;font-size:12.5px;line-height:12.5px;color:#000;font-weight:400;transform:scaleX(1.0142);">1.77527464</div>
<div class="t g" style="left:28.40px;top:645.00px;font-size:12.5px;line-height:12.5px;color:#000;font-weight:400;transform:scaleX(1.0215);">2025-12-05T06:51:58.633591</div>
<div class="t g" style="left:210.40px;top:645.00px;font-size:12.5px;line-height:12.5px;color:#000;font-weight:400;transform:scaleX(1.0873);">Avalanche</div>
<div class="t g" style="left:345.40px;top:645.00px;font-size:12.5px;line-height:12.5px;color:#000;font-weight:400;transform:scaleX(0.9888);">73137413</div>
<div class="t g" style="left:406.40px;top:645.00px;font-size:12.5px;line-height:12.5px;color:#000;font-weight:400;transform:scaleX(1.0146);">2025-12-05T06:51:50</div>
<div class="t g" style="left:639.40px;top:645.00px;font-size:12.5px;line-height:12.5px;color:#000;font-weight:400;transform:scaleX(0.9369);">44</div>
<div class="t g" style="left:725.40px;top:645.00px;font-size:12.5px;line-height:12.5px;color:#000;font-weight:400;transform:scaleX(1.0133);">494.02043933</div>
<div class="t g" style="left:28.40px;top:665.00px;font-size:12.5px;line-height:12.5px;color:#000;font-weight:400;transform:scaleX(1.0215);">2025-12-05T06:51:59.163657</div>
<div class="t g" style="left:210.40px;top:665.00px;font-size:12.5px;line-height:12.5px;color:#000;font-weight:400;transform:scaleX(1.0926);">Fantom</div>
<div class="t g" style="left:338.40px;top:665.00px;font-size:12.5px;line-height:12.5px;color:#000;font-weight:400;transform:scaleX(1.0061);">118409834</div>
<div class="t g" style="left:406.40px;top:665.00px;font-size:12.5px;line-height:12.5px;color:#000;font-weight:400;transform:scaleX(1.0146);">2025-12-05T06:51:55</div>
<div class="t g" style="left:646.40px;top:665.00px;font-size:12.5px;line-height:12.5px;color:#000;font-weight:400;transform:scaleX(0.8649);">1</div>
<div class="t g" style="left:676.40px;top:665.00px;font-size:12.5px;line-height:12.5px;color:#000;font-weight:400;transform:scaleX(1.0107);">2553823566.56619000</div>
<div class="t g" style="left:28.40px;top:685.00px;font-size:12.5px;line-height:12.5px;color:#000;font-weight:400;transform:scaleX(1.0215);">2025-12-05T06:51:59.651741</div>
<div class="t g" style="left:210.40px;top:685.00px;font-size:12.5px;line-height:12.5px;color:#000;font-weight:400;transform:scaleX(1.0444);">Gnosis</div>
<div class="t g" style="left:345.40px;top:685.00px;font-size:12.5px;line-height:12.5px;color:#000;font-weight:400;transform:scaleX(0.9888);">43489392</div>
<div class="t g" style="left:406.40px;top:685.00px;font-size:12.5px;line-height:12.5px;color:#000;font-weight:400;transform:scaleX(1.0146);">2025-12-05T06:51:55</div>
<div class="t g" style="left:639.40px;top:685.00px;font-size:12.5px;line-height:12.5px;color:#000;font-weight:400;transform:scaleX(0.9369);">21</div>
<div class="t g" style="left:676.40px;top:685.00px;font-size:12.5px;line-height:12.5px;color:#000;font-weight:400;transform:scaleX(1.0181);">1134265334.13343000</div>
<div class="t g" style="left:28.40px;top:705.00px;font-size:12.5px;line-height:12.5px;color:#000;font-weight:400;transform:scaleX(1.0274);">2025-12-05T06:52:00.202611</div>
<div class="t g" style="left:210.40px;top:705.00px;font-size:12.5px;line-height:12.5px;color:#000;font-weight:400;transform:scaleX(1.0592);">Cronos</div>
<div class="t g" style="left:345.40px;top:705.00px;font-size:12.5px;line-height:12.5px;color:#000;font-weight:400;transform:scaleX(0.9888);">43506912</div>
<div class="t g" style="left:406.40px;top:705.00px;font-size:12.5px;line-height:12.5px;color:#000;font-weight:400;transform:scaleX(1.0146);">2025-12-05T06:51:55</div>
<div class="t g" style="left:646.40px;top:705.00px;font-size:12.5px;line-height:12.5px;color:#000;font-weight:400;transform:scaleX(0.8649);">0</div>
<div class="t g" style="left:711.40px;top:705.00px;font-size:12.5px;line-height:12.5px;color:#000;font-weight:400;transform:scaleX(1.0120);">76862.85166795</div>
<div class="t g" style="left:28.40px;top:725.00px;font-size:12.5px;line-height:12.5px;color:#000;font-weight:400;transform:scaleX(1.0215);">2025-12-05T06:52:00.764956</div>
<div class="t g" style="left:210.40px;top:725.00px;font-size:12.5px;line-height:12.5px;color:#000;font-weight:400;transform:scaleX(1.0745);">Celo</div>
<div class="t g" style="left:345.40px;top:725.00px;font-size:12.5px;line-height:12.5px;color:#000;font-weight:400;transform:scaleX(0.9888);">53016756</div>
<div class="t g" style="left:406.40px;top:725.00px;font-size:12.5px;line-height:12.5px;color:#000;font-weight:400;transform:scaleX(1.0146);">2025-12-05T06:51:54</div>
<div class="t g" style="left:639.40px;top:725.00px;font-size:12.5px;line-height:12.5px;color:#000;font-weight:400;transform:scaleX(0.9369);">50</div>
<div class="t g" style="left:725.40px;top:725.00px;font-size:12.5px;line-height:12.5px;color:#000;font-weight:400;transform:scaleX(1.0133);">359.44526692</div>
</div>
<div class="r" style="left:24px;top:227px;width:185px;height:23px;border:2px solid #217346"></div>
<div class="r" style="left:26px;top:229px;width:181px;height:19px;border:1px solid #fff"></div>
<div class="r" style="left:205px;top:246px;width:5px;height:5px;background:#217346;outline:1px solid #fff"></div>
<div class="r" style="left:0px;top:961px;width:1680px;height:27px;background:#f3f3f3"></div>
<div class="r" style="left:100px;top:960px;width:115px;height:25px;background:#fff;border-left:1px solid #ababab;border-right:1px solid #ababab"></div>
<div class="r" style="left:100px;top:983px;width:115px;height:2px;background:#217346"></div>
<div class="t" style="left:112.50px;top:968.00px;font-size:12px;line-height:12px;color:#217346;font-weight:700;transform:scaleX(1.1095);">Wallet Activity</div>
<div class="r" style="left:0px;top:988px;width:1680px;height:23px;background:#217346"></div>
<div class="r" style="left:0px;top:1010px;width:1680px;height:1px;background:#14291f"></div>
<div class="r" style="left:48px;top:1010px;width:344px;height:1px;background:#d8dcd9"></div>
<div class="r" style="left:540px;top:1010px;width:44px;height:1px;background:#6f7a74"></div>
<div class="t" style="left:7.50px;top:992.00px;font-size:12px;line-height:12px;color:#fff;font-weight:400;transform:scaleX(0.7862);">READY</div>
<div class="t" style="left:1645.00px;top:993.00px;font-size:12px;line-height:12px;color:#fff;font-weight:400;transform:scaleX(0.8431);">100%</div>
<svg class="r" style="left:93px;top:163px;" width="7" height="4" viewBox="0 0 7 4"><path d="M0 0H7L3.5 4Z" fill="#666"/></svg>
<div class="r" style="left:121px;top:161px;width:2px;height:2px;background:#999"></div>
<div class="r" style="left:121px;top:165px;width:2px;height:2px;background:#999"></div>
<div class="r" style="left:121px;top:169px;width:2px;height:2px;background:#999"></div>
<svg class="r" style="left:150px;top:162px;" width="12" height="10" viewBox="0 0 12 10"><path d="M1 0.5L11 9.5M11 0.5L1 9.5" stroke="#c2c2c2" stroke-width="1.4"/></svg>
<svg class="r" style="left:185px;top:160px;" width="15" height="12" viewBox="0 0 15 12"><path d="M1.5 6.5 L5.5 10.5 L13.5 1.5" fill="none" stroke="#c2c2c2" stroke-width="2"/></svg>
<svg class="r" style="left:220px;top:158px;" width="16" height="15" viewBox="0 0 16 15"><text x="1" y="12.5" font-family="Liberation Serif" font-style="italic" font-weight="700" font-size="13" fill="#555">f</text><text x="7" y="13" font-family="Liberation Serif" font-style="italic" font-weight="700" font-size="9" fill="#555">x</text></svg>
<svg class="r" style="left:1663px;top:161px;" width="8" height="6" viewBox="0 0 8 6"><path d="M0.8 5 L4 1.8 L7.2 5" fill="none" stroke="#555" stroke-width="1.6"/></svg>
<svg class="r" style="left:10px;top:213px;" width="13" height="12" viewBox="0 0 13 12"><path d="M12 0 V12 H0 Z" fill="#dcdcdc"/></svg>
<div class="r" style="left:1659px;top:209px;width:21px;height:752px;background:#fff"></div>
<div class="r" style="left:1662px;top:211px;width:15px;height:15px;border:1px solid #ababab;background:#fff"></div>
<svg class="r" style="left:1665px;top:216px;" width="9" height="5" viewBox="0 0 9 5"><path d="M0.5 4.5H8.5L4.5 0.5Z" fill="#777"/></svg>
<div class="r" style="left:1662px;top:225px;width:15px;height:701px;border:1px solid #ababab;border-top:2px solid #ababab;background:#fff"></div>
<div class="r" style="left:1662px;top:926px;width:15px;height:20px;background:#e9e9e9"></div>
<div class="r" style="left:1662px;top:946px;width:15px;height:15px;border:1px solid #ababab;background:#fff"></div>
<svg class="r" style="left:1665px;top:952px;" width="9" height="5" viewBox="0 0 9 5"><path d="M0.5 0.5H8.5L4.5 4.5Z" fill="#777"/></svg>
<svg class="r" style="left:26px;top:969px;" width="6" height="9" viewBox="0 0 6 9"><path d="M5.5 0.5V8.5L0.5 4.5Z" fill="#c0c0c0"/></svg>
<svg class="r" style="left:55px;top:969px;" width="6" height="9" viewBox="0 0 6 9"><path d="M0.5 0.5V8.5L5.5 4.5Z" fill="#c0c0c0"/></svg>
<svg class="r" style="left:247px;top:965px;" width="18" height="18" viewBox="0 0 18 18"><circle cx="9" cy="8.7" r="7.5" fill="none" stroke="#777" stroke-width="1.2"/><path d="M9 4.5V13 M4.8 8.7H13.2" stroke="#777" stroke-width="1.8"/></svg>
<div class="r" style="left:1008px;top:969px;width:2px;height:2px;background:#999"></div>
<div class="r" style="left:1008px;top:973px;width:2px;height:2px;background:#999"></div>
<div class="r" style="left:1008px;top:977px;width:2px;height:2px;background:#999"></div>
<div class="r" style="left:1025px;top:967px;width:15px;height:15px;border:1px solid #ababab;background:#fff"></div>
<svg class="r" style="left:1029px;top:970px;" width="5" height="9" viewBox="0 0 5 9"><path d="M4.5 0.5V8.5L0.5 4.5Z" fill="#666"/></svg>
<div class="r" style="left:1039px;top:967px;width:573px;height:15px;border:1px solid #ababab;border-left:2px solid #ababab;background:#fff"></div>
<div class="r" style="left:1612px;top:967px;width:32px;height:15px;background:#e9e9e9"></div>
<div class="r" style="left:1644px;top:967px;width:15px;height:15px;border:1px solid #ababab;background:#fff"></div>
<svg class="r" style="left:1650px;top:970px;" width="5" height="9" viewBox="0 0 5 9"><path d="M0.5 0.5V8.5L4.5 4.5Z" fill="#666"/></svg>
<div class="r" style="left:1388px;top:988px;width:38px;height:22px;background:#1a5c38"></div>
<svg class="r" style="left:1400px;top:992px;" width="14" height="14" viewBox="0 0 14 14"><rect x="0.5" y="0.5" width="12" height="12" fill="none" stroke="#dff3e5"/><path d="M4.5 0.5V12.5 M8.5 0.5V12.5 M0.5 4.5H12.5 M0.5 8.5H12.5" stroke="#dff3e5" stroke-width="1"/></svg>
<svg class="r" style="left:1438px;top:992px;" width="15" height="14" viewBox="0 0 15 14"><rect x="0.5" y="0.5" width="13" height="12" fill="none" stroke="#dff3e5"/><rect x="3.5" y="2.5" width="7" height="8" fill="none" stroke="#dff3e5"/><path d="M5 4.5H9 M5 6.5H9 M5 8.5H9" stroke="#dff3e5"/></svg>
<svg class="r" style="left:1476px;top:992px;" width="14" height="14" viewBox="0 0 14 14"><rect x="0.5" y="0.5" width="13" height="12" fill="none" stroke="#dff3e5"/><rect x="1" y="1" width="3" height="7" fill="#dff3e5"/><rect x="5" y="1" width="3" height="5" fill="#dff3e5"/></svg>
<div class="r" style="left:1507px;top:998px;width:6px;height:2px;background:#dff3e5"></div>
<div class="r" style="left:1517px;top:998px;width:100px;height:1px;background:#dff3e5"></div>
<div class="r" style="left:1565px;top:993px;width:4px;height:11px;background:#dff3e5"></div>
<svg class="r" style="left:1621px;top:995px;" width="8" height="8" viewBox="0 0 8 8"><path d="M4 0V8 M0 4H8" stroke="#dff3e5" stroke-width="2"/></svg>
</body></html>
